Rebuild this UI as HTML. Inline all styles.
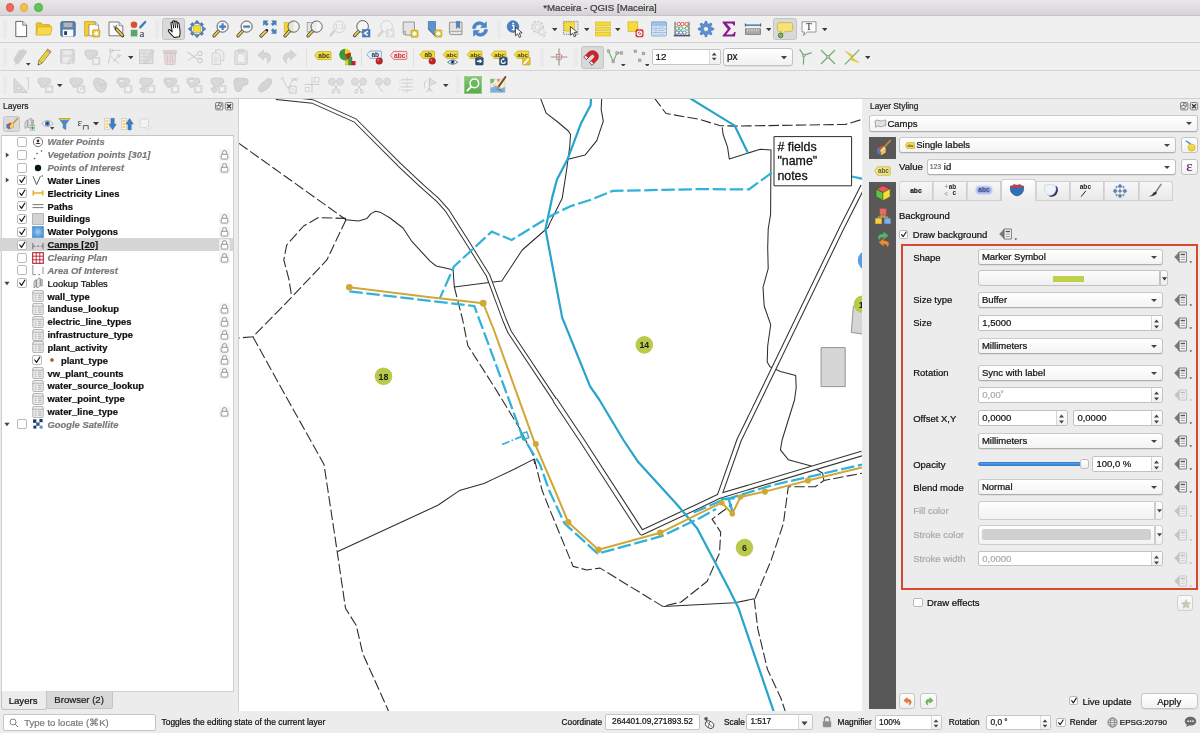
<!DOCTYPE html>
<html><head><meta charset="utf-8"><title>*Maceira - QGIS [Maceira]</title>
<style>
*{box-sizing:border-box;margin:0;padding:0}
html,body{width:1200px;height:733px;overflow:hidden}
body{position:relative;background:#ececec;font-family:"Liberation Sans",sans-serif;color:#1a1a1a;font-size:9.5px;-webkit-text-stroke:0.22px currentColor}
.abs{position:absolute}
#layers,#styling,#status,#titlebar,#toolbars,#map{will-change:transform}
#titlebar{left:0;top:0;width:1200px;height:15.6px;background:linear-gradient(#e9e7e9,#d6d4d6);border-bottom:0.6px solid #c6c4c6}
#titlebar .t{left:0;width:1200px;top:1px;text-align:center;font-size:9.7px;color:#3c3c3c;line-height:13px}
.tl{width:8.6px;height:8.6px;border-radius:50%;top:3.3px}
#toolbars{left:0;top:16px;width:1200px;height:83px;background:#f0f0f0}
.tbsep{left:0;width:1200px;height:1px;background:#d2d2d2}
#map{left:239px;top:99px;width:623px;height:612px;background:#fff;overflow:hidden}
.ic{position:absolute;width:20px;height:20px}
/*LAYERS*/
#layers{left:0;top:99px;width:238px;height:590px}
.row{position:absolute;left:2px;width:230px;height:13px;font-size:9.4px;font-weight:bold;line-height:13px;white-space:nowrap;color:#111}
.row.off{color:#7a7a7a;font-style:italic}
.row.grp{font-weight:normal}
.row .tx{position:absolute;left:45px;top:0}
.cb{position:absolute;width:10px;height:10px;border:1px solid #b9b9b9;border-radius:2px;background:#fff}
.cb svg{position:absolute;left:0;top:0;width:100%;height:100%}
/*STYLING*/
.combo{position:absolute;height:16px;border:1px solid #c2c2c2;border-top-color:#cacaca;border-bottom-color:#adadad;border-radius:3px;background:linear-gradient(#fff,#f3f3f3);font-size:9.6px;line-height:14px;padding-left:4px;white-space:nowrap;color:#111;box-shadow:0 0.5px 0.5px rgba(0,0,0,.12)}
.combo::after{content:"";position:absolute;right:5px;top:6px;border:3px solid transparent;border-top:3.5px solid #444;border-bottom:0}
.spin{position:absolute;height:16px;border:1px solid #c2c2c2;border-radius:2px;background:#fff;font-size:9.6px;line-height:14px;padding-left:3px;white-space:nowrap;color:#111}
.lbl{position:absolute;font-size:9.6px;line-height:12px;white-space:nowrap;color:#111}
.dis{color:#a9a9a9 !important}
</style></head>
<body>
<!--TITLEBAR-->
<div id="titlebar" class="abs">
 <div class="abs tl" style="left:5.7px;background:#ee6a5f;border:0.5px solid #de5a50"></div>
 <div class="abs tl" style="left:19.9px;background:#f5bf4f;border:0.5px solid #e0aa3a"></div>
 <div class="abs tl" style="left:34.2px;background:#61c554;border:0.5px solid #50b044"></div>
 <div class="abs t">*Maceira - QGIS [Maceira]</div>
</div>
<!--TOOLBARS-->
<div id="toolbars" class="abs">
 <div class="abs tbsep" style="top:26px"></div>
 <div class="abs tbsep" style="top:54.4px"></div>
<!--TB1-->
<div class="abs" style="left:2.5px;top:4.2px;width:4px;height:18px;background-image:radial-gradient(circle,#dadada 0.6px,transparent 0.8px);background-size:2px 2px;opacity:.55"></div>
<svg class="abs" style="left:10.7px;top:3.2px" width="20" height="20" viewBox="0 0 20 20"><path d="M4.8,2.4 H11.8 L15.6,6.2 V17.6 H4.8 Z" fill="#fff" stroke="#555" stroke-width="0.9" stroke-linejoin="round"/><path d="M11.8,2.4 V6.2 H15.6" fill="#eee" stroke="#555" stroke-width="0.8" stroke-linejoin="round"/></svg>
<svg class="abs" style="left:34.0px;top:3.2px" width="20" height="20" viewBox="0 0 20 20"><path d="M2.2,15.8 V4.8 Q2.2,3.8 3.2,3.8 H7 L8.6,5.6 H15.2 Q16.2,5.6 16.2,6.6 V8" fill="#e9c32f" stroke="#cfa51d" stroke-width="0.8"/><path d="M2.2,16 L3.6,8.6 Q3.8,7.8 4.8,7.8 H17.2 Q18.2,7.8 18,8.8 L16.6,15.2 Q16.4,16 15.4,16 Z" fill="#f9db4a" stroke="#d3a91f" stroke-width="0.8"/></svg>
<svg class="abs" style="left:57.8px;top:3.2px" width="20" height="20" viewBox="0 0 20 20"><rect x="2.8" y="2.6" width="14.4" height="14.8" rx="1.6" fill="#5584b4" stroke="#3f6c9c" stroke-width="0.9"/><rect x="5.4" y="3.6" width="9.2" height="4.6" fill="#b5b5b5" stroke="#8a8a8a" stroke-width="0.5"/><rect x="4.8" y="10.6" width="10.4" height="7" fill="#fdfdfd"/><rect x="6.2" y="12.2" width="2.8" height="3.8" fill="#1e3c66"/></svg>
<svg class="abs" style="left:81.6px;top:3.2px" width="20" height="20" viewBox="0 0 20 20"><path d="M7,3 H13.4 L16.6,6.2 V16.8 H7 Z" fill="#fff" stroke="#888" stroke-width="0.8"/><path d="M13.4,3 V6.2 H16.6" fill="none" stroke="#888" stroke-width="0.7"/><path d="M2.6,2.6 H12.6 V5.6 H6.4 V17 H2.6 Z" fill="#f2cf3c" stroke="#c9a21c" stroke-width="0.8"/><rect x="10.6" y="10.8" width="7.2" height="7.2" rx="0.8" fill="#e3c12c" stroke="#b49318" stroke-width="0.6"/><path d="M14.2,11.700000000000001 L14.2,17.1 M11.5,14.4 L16.900000000000002,14.4 M12.2,12.4 L16.2,16.4 M16.2,12.4 L12.2,16.4" stroke="#fff" stroke-width="0.95"/><circle cx="14.2" cy="14.4" r="1.3" fill="#fff"/></svg>
<svg class="abs" style="left:105.5px;top:3.2px" width="20" height="20" viewBox="0 0 20 20"><path d="M3,3 H13 L16.8,6.8 V16.8 H3 Z" fill="#fbfbfb" stroke="#6e6e6e" stroke-width="0.9" stroke-linejoin="round"/><path d="M13,3 V6.8 H16.8" fill="#e8e8e8" stroke="#6e6e6e" stroke-width="0.7"/><path d="M7.4,7 L10,9.8 M10.8,6.2 L8.4,9.6" stroke="#8a8a8a" stroke-width="1.3"/><path d="M10.4,10 L16.6,16.6" stroke="#3a3a3a" stroke-width="3.4" stroke-linecap="round"/><path d="M10.8,10.4 L16.3,16.3" stroke="#e9c23a" stroke-width="2" stroke-linecap="round"/></svg>
<svg class="abs" style="left:128.4px;top:3.2px" width="20" height="20" viewBox="0 0 20 20"><circle cx="6" cy="5.8" r="3.3" fill="#d9512c"/><path d="M12.2,8.4 L17.2,3" stroke="#3b7cc0" stroke-width="2.3" stroke-linecap="round"/><rect x="2.8" y="10.8" width="6.6" height="6.6" fill="#5aa56c"/><text x="11.4" y="17.6" font-family="Liberation Serif" font-size="11" fill="#333" style="-webkit-text-stroke:0">a</text></svg>
<div class="abs" style="left:155.4px;top:4.2px;width:4px;height:18px;background-image:radial-gradient(circle,#dadada 0.6px,transparent 0.8px);background-size:2px 2px;opacity:.55"></div>
<div class="abs" style="left:162.2px;top:2.4px;width:22.8px;height:22.0px;background:#d9d9d9;border:1px solid #c4c4c4;border-radius:2.5px"></div>
<svg class="abs" style="left:163.6px;top:3.2px" width="20" height="20" viewBox="0 0 20 20"><path d="M7.4,18.6 C5.4,15.6 3.4,13.4 2.6,11.6 C2.1,10.3 3.7,9.6 4.6,10.8 L6.2,12.8 V4.4 C6.2,2.9 8.2,2.9 8.2,4.4 V9 V3 C8.2,1.5 10.2,1.5 10.2,3 V9 V3.8 C10.2,2.4 12.2,2.4 12.2,3.8 V9.4 V5.6 C12.2,4.3 14.1,4.3 14.1,5.7 V12.8 C14.1,15.4 13.4,17 12.8,18.6 Z" fill="#fff" stroke="#111" stroke-width="1" stroke-linejoin="round" transform="rotate(-8 10 10) translate(1.6 -0.2)"/></svg>
<svg class="abs" style="left:187.2px;top:3.2px" width="20" height="20" viewBox="0 0 20 20"><g fill="#4a7fc0" stroke="#2f5f9a" stroke-width="0.5"><path d="M10,1.2 L12.8,4.6 H7.2 Z"/><path d="M10,18.8 L12.8,15.4 H7.2 Z"/><path d="M1.2,10 L4.6,7.2 V12.8 Z"/><path d="M18.8,10 L15.4,7.2 V12.8 Z"/><path d="M5.4,3.4 L7.4,5.4 L5.4,7.4 L3.4,5.4 Z"/><path d="M14.6,3.4 L16.6,5.4 L14.6,7.4 L12.6,5.4 Z"/><path d="M5.4,12.6 L7.4,14.6 L5.4,16.6 L3.4,14.6 Z"/><path d="M14.6,12.6 L16.6,14.6 L14.6,16.6 L12.6,14.6 Z"/></g><rect x="6.4" y="6.4" width="7.2" height="7.2" fill="#f4dc3a" stroke="#c9ab1d" stroke-width="0.6"/></svg>
<svg class="abs" style="left:211.4px;top:3.2px" width="20" height="20" viewBox="0 0 20 20"><path d="M7.6,11.9 L3,16.9" stroke="#3a3a3a" stroke-width="3.2" stroke-linecap="round"/><path d="M7.2,12.3 L3.2,16.7" stroke="#eccb45" stroke-width="1.9" stroke-linecap="round"/><circle cx="11.6" cy="7.6" r="5.6" fill="#f4f4f4" stroke="#4a4a4a" stroke-width="0.9"/><path d="M11.6,4.2 V11 M8.2,7.6 H15" stroke="#3f7bc0" stroke-width="2.1"/></svg>
<svg class="abs" style="left:234.8px;top:3.2px" width="20" height="20" viewBox="0 0 20 20"><path d="M7.6,11.9 L3,16.9" stroke="#3a3a3a" stroke-width="3.2" stroke-linecap="round"/><path d="M7.2,12.3 L3.2,16.7" stroke="#eccb45" stroke-width="1.9" stroke-linecap="round"/><circle cx="11.6" cy="7.6" r="5.6" fill="#f4f4f4" stroke="#4a4a4a" stroke-width="0.9"/><path d="M8.2,7.6 H15" stroke="#3f7bc0" stroke-width="2.1"/></svg>
<svg class="abs" style="left:258.2px;top:3.2px" width="20" height="20" viewBox="0 0 20 20"><path d="M8.6,11.6 L3,17" stroke="#3a3a3a" stroke-width="3.2" stroke-linecap="round"/><path d="M8.2,12 L3.2,16.8" stroke="#eccb45" stroke-width="1.9" stroke-linecap="round"/><g fill="#4a80c2" stroke="#2f5f9a" stroke-width="0.4"><path d="M5.4,1.8 H10 L8.6,3.2 L10.4,5 L8.6,6.8 L6.8,5 L5.4,6.4 Z"/><path d="M18.2,1.8 V6.4 L16.8,5 L15,6.8 L13.2,5 L15,3.2 L13.6,1.8 Z"/><path d="M18.2,14.6 H13.6 L15,13.2 L13.2,11.4 L15,9.6 L16.8,11.4 L18.2,10 Z"/></g><circle cx="8.8" cy="11.2" r="1.1" fill="#222"/></svg>
<svg class="abs" style="left:281.6px;top:3.2px" width="20" height="20" viewBox="0 0 20 20"><rect x="2.2" y="3.6" width="8.4" height="9.4" fill="#f2d632" stroke="#c9ab1d" stroke-width="0.6"/><path d="M7.6,11.9 L3,16.9" stroke="#3a3a3a" stroke-width="3.2" stroke-linecap="round"/><path d="M7.2,12.3 L3.2,16.7" stroke="#eccb45" stroke-width="1.9" stroke-linecap="round"/><circle cx="11.6" cy="7.6" r="5.6" fill="#e4e4d4" stroke="#4a4a4a" stroke-width="0.9"/><path d="M11.6,2.6 a5,5 0 0 1 0,10 Z" fill="#fff" opacity="0.6"/></svg>
<svg class="abs" style="left:305.0px;top:3.2px" width="20" height="20" viewBox="0 0 20 20"><rect x="2.2" y="3.6" width="8.4" height="9.4" fill="#e6e6e6" stroke="#8a8a8a" stroke-width="0.7"/><path d="M7.6,11.9 L3,16.9" stroke="#3a3a3a" stroke-width="3.2" stroke-linecap="round"/><path d="M7.2,12.3 L3.2,16.7" stroke="#eccb45" stroke-width="1.9" stroke-linecap="round"/><circle cx="11.6" cy="7.6" r="5.6" fill="#ebebeb" stroke="#4a4a4a" stroke-width="0.9"/><path d="M11.6,2.6 a5,5 0 0 1 0,10 Z" fill="#fff" opacity="0.6"/></svg>
<svg class="abs" style="left:328.4px;top:3.2px" width="20" height="20" viewBox="0 0 20 20"><g opacity="0.55"><path d="M6.6,11.6 L2.6,16.4" stroke="#bdbdbd" stroke-width="2.6" stroke-linecap="round"/><circle cx="11.4" cy="7.8" r="5.8" fill="#f0f0f0" stroke="#b4b4b4" stroke-width="0.9"/><text x="11.4" y="10.4" font-family="Liberation Sans" font-size="7" text-anchor="middle" fill="#aaa">1:1</text></g></svg>
<svg class="abs" style="left:352.2px;top:3.2px" width="20" height="20" viewBox="0 0 20 20"><path d="M7,11.8 L2.6,16.6" stroke="#3a3a3a" stroke-width="3.2" stroke-linecap="round"/><path d="M6.6,12.2 L2.8,16.4" stroke="#eccb45" stroke-width="1.9" stroke-linecap="round"/><circle cx="10.6" cy="7.4" r="5.8" fill="#f6f6f6" stroke="#4a4a4a" stroke-width="0.9"/><rect x="10.6" y="10.6" width="7.4" height="7.4" fill="#4a80bf" stroke="#2f5f9a" stroke-width="0.5"/><path d="M15.8,12.2 L12.6,14.3 L15.8,16.4" fill="none" stroke="#fff" stroke-width="1.4"/></svg>
<svg class="abs" style="left:375.8px;top:3.2px" width="20" height="20" viewBox="0 0 20 20"><g opacity="0.5"><path d="M7,11.8 L2.6,16.6" stroke="#bbb" stroke-width="2.8" stroke-linecap="round"/><circle cx="10.6" cy="7.4" r="5.8" fill="#f3f3f3" stroke="#b0b0b0" stroke-width="0.9"/><rect x="10.6" y="10.6" width="7.4" height="7.4" fill="#d0d0d0" stroke="#b4b4b4" stroke-width="0.5"/><path d="M12.8,12.2 L16,14.3 L12.8,16.4" fill="none" stroke="#fff" stroke-width="1.4"/></g></svg>
<svg class="abs" style="left:399.6px;top:3.2px" width="20" height="20" viewBox="0 0 20 20"><path d="M3.2,3 H14.4 V14.6 Q14.4,16 13,16 H5.4 Q3.2,16 3.2,13.8 Z" fill="#e4e4e4" stroke="#8e8e8e" stroke-width="0.9"/><path d="M3.2,13.8 Q3.4,12 5.4,12.4 V16" fill="#cfcfcf" stroke="#8e8e8e" stroke-width="0.7"/><rect x="11" y="11.2" width="7" height="7" rx="0.8" fill="#e3c12c" stroke="#b49318" stroke-width="0.6"/><path d="M14.5,12.1 L14.5,17.3 M11.9,14.7 L17.1,14.7 M12.6,12.799999999999999 L16.4,16.599999999999998 M16.4,12.799999999999999 L12.6,16.599999999999998" stroke="#fff" stroke-width="0.95"/><circle cx="14.5" cy="14.7" r="1.3" fill="#fff"/></svg>
<svg class="abs" style="left:423.6px;top:3.2px" width="20" height="20" viewBox="0 0 20 20"><path d="M4.4,2.6 H11.4 V17.4 L7.9,14 L4.4,10.4 Z" fill="#4f84bf" stroke="#2f5f9a" stroke-width="0.7"/><path d="M4.4,2.6 H11.4 V14 H9 L4.4,9 Z" fill="#5f93cd"/><rect x="10.8" y="11" width="7" height="7" rx="0.8" fill="#e3c12c" stroke="#b49318" stroke-width="0.6"/><path d="M14.3,11.9 L14.3,17.1 M11.700000000000001,14.5 L16.900000000000002,14.5 M12.4,12.6 L16.2,16.4 M16.2,12.6 L12.4,16.4" stroke="#fff" stroke-width="0.95"/><circle cx="14.3" cy="14.5" r="1.3" fill="#fff"/></svg>
<svg class="abs" style="left:446.4px;top:3.2px" width="20" height="20" viewBox="0 0 20 20"><path d="M3.4,3.2 H16 V15.6 H5.4 Q3.4,15.6 3.4,13.8 Z" fill="#e2e2e2" stroke="#8e8e8e" stroke-width="0.9"/><path d="M3.4,13.8 Q3.6,12.2 5.6,12.4 H16" fill="none" stroke="#8e8e8e" stroke-width="0.7"/><path d="M10.4,2.4 H13.6 V9.4 L12,7.8 L10.4,9.4 Z" fill="#4f84bf" stroke="#2f5f9a" stroke-width="0.5"/></svg>
<svg class="abs" style="left:470.2px;top:3.2px" width="20" height="20" viewBox="0 0 20 20"><g fill="#4a88cc" stroke="#2f66a8" stroke-width="0.5" stroke-linejoin="round"><path d="M2.6,9.4 C2.6,5.4 5.8,2.8 9.6,2.8 C11.6,2.8 13.2,3.6 14.4,4.8 L16.4,2.8 V8.6 H10.6 L12.4,6.8 C11.6,6 10.8,5.6 9.6,5.6 C7.4,5.6 5.6,7.2 5.4,9.4 Z"/><path d="M17.4,10.6 C17.4,14.6 14.2,17.2 10.4,17.2 C8.4,17.2 6.8,16.4 5.6,15.2 L3.6,17.2 V11.4 H9.4 L7.6,13.2 C8.4,14 9.2,14.4 10.4,14.4 C12.6,14.4 14.4,12.8 14.6,10.6 Z"/></g></svg>
<div class="abs" style="left:497.0px;top:4.2px;width:4px;height:18px;background-image:radial-gradient(circle,#dadada 0.6px,transparent 0.8px);background-size:2px 2px;opacity:.55"></div>
<svg class="abs" style="left:505.4px;top:3.2px" width="20" height="20" viewBox="0 0 20 20"><circle cx="8" cy="7.6" r="5.8" fill="#4a7fc0" stroke="#2f5f9a" stroke-width="0.6"/><path d="M7,6.6 H8.8 V10.6 H9.8 M6.8,10.6 H9.8" stroke="#fff" stroke-width="1.4" fill="none"/><circle cx="8.2" cy="4.4" r="1" fill="#fff"/><path d="M10.4,8.2 l0,8.6 l2.2,-2 l1.7,3.6 l1.6,-0.8 l-1.7,-3.5 l3,-0.2 Z" fill="#fff" stroke="#222" stroke-width="0.8" stroke-linejoin="round"/></svg>
<svg class="abs" style="left:528.6px;top:3.2px" width="20" height="20" viewBox="0 0 20 20"><g opacity="0.5"><circle cx="8.6" cy="8" r="5.4" fill="#e6e6e6" stroke="#b0b0b0" stroke-width="2" stroke-dasharray="2.2 1.3"/><circle cx="8.6" cy="8" r="2.6" fill="#f3f3f3" stroke="#b0b0b0" stroke-width="0.8"/><path d="M11,9 l0,7.6 l2,-1.8 l1.5,3.2 l1.4,-0.7 l-1.5,-3.1 l2.6,-0.2 Z" fill="#f4f4f4" stroke="#aaa" stroke-width="0.8"/></g></svg>
<svg class="abs" style="left:551.6px;top:12.0px" width="5.6" height="3.2" viewBox="0 0 5.6 3.2"><path d="M0,0 H5.6 L2.8,3.2 Z" fill="#3c3c3c"/></svg>
<svg class="abs" style="left:561.2px;top:3.2px" width="20" height="20" viewBox="0 0 20 20"><rect x="2.4" y="2.4" width="14.6" height="13" fill="#e6e6e6" stroke="#666" stroke-width="0.7" stroke-dasharray="1.4 1"/><rect x="3" y="3" width="10.2" height="9" fill="#f4dc3a" stroke="#c9ab1d" stroke-width="0.5"/><path d="M9.4,7.6 l0,8.6 l2.2,-2 l1.7,3.6 l1.6,-0.8 l-1.7,-3.5 l3,-0.2 Z" fill="#fff" stroke="#222" stroke-width="0.8" stroke-linejoin="round"/></svg>
<svg class="abs" style="left:583.6px;top:12.0px" width="5.6" height="3.2" viewBox="0 0 5.6 3.2"><path d="M0,0 H5.6 L2.8,3.2 Z" fill="#3c3c3c"/></svg>
<svg class="abs" style="left:592.8px;top:3.2px" width="20" height="20" viewBox="0 0 20 20"><g fill="#f4dc3a" stroke="#d4b422" stroke-width="0.6"><rect x="2.6" y="3" width="14.8" height="3.8"/><rect x="2.6" y="8.1" width="14.8" height="3.8"/><rect x="2.6" y="13.2" width="14.8" height="3.8"/></g></svg>
<svg class="abs" style="left:615.4px;top:12.0px" width="5.6" height="3.2" viewBox="0 0 5.6 3.2"><path d="M0,0 H5.6 L2.8,3.2 Z" fill="#3c3c3c"/></svg>
<svg class="abs" style="left:625.4px;top:3.2px" width="20" height="20" viewBox="0 0 20 20"><rect x="3" y="2.8" width="9.8" height="9.6" fill="#f4dc3a" stroke="#c9ab1d" stroke-width="0.6"/><rect x="10.8" y="10.6" width="7.4" height="7.4" rx="1.4" fill="#e03a3a" stroke="#b82222" stroke-width="0.5"/><circle cx="14.5" cy="14.3" r="2.3" fill="none" stroke="#fff" stroke-width="1.1"/><path d="M12.9,15.9 L16.1,12.7" stroke="#fff" stroke-width="1.1"/></svg>
<svg class="abs" style="left:648.6px;top:3.2px" width="20" height="20" viewBox="0 0 20 20"><rect x="2.6" y="3" width="14.8" height="14" rx="0.8" fill="#eaf1fa" stroke="#7aa4d4" stroke-width="0.9"/><rect x="2.6" y="3" width="14.8" height="3.2" fill="#a4c3e6" stroke="#7aa4d4" stroke-width="0.6"/><path d="M7,6.2 V17 M2.4,9.8 H17.6 M2.4,13.4 H17.6" stroke="#7ea8d6" stroke-width="0.7"/><path d="M8.6,8 H15.6 M8.6,11.6 H15.6 M8.6,15.2 H15.6 M3.8,8 H5.6 M3.8,11.6 H5.6 M3.8,15.2 H5.6" stroke="#9dbde0" stroke-width="1"/></svg>
<svg class="abs" style="left:672.0px;top:3.2px" width="20" height="20" viewBox="0 0 20 20"><path d="M3,2.8 V16.2 M17,2.8 V16.2" stroke="#777" stroke-width="1.2"/><path d="M1.8,16.6 H18.2" stroke="#555" stroke-width="1.6"/><path d="M3,5 H17 M3,9.4 H17 M3,13.6 H17" stroke="#999" stroke-width="0.6"/><g stroke-width="0.8" fill="#fff"><circle cx="6.8" cy="5" r="1.7" stroke="#d43a3a"/><circle cx="10.4" cy="5" r="1.7" stroke="#d43a3a"/><circle cx="14.6" cy="5" r="1.7" stroke="#d43a3a"/><circle cx="5.2" cy="9.4" r="1.7" stroke="#3a9a4a"/><circle cx="8.8" cy="9.4" r="1.7" stroke="#3a9a4a"/><circle cx="14.8" cy="9.4" r="1.7" stroke="#3a9a4a"/><circle cx="5.2" cy="13.6" r="1.7" stroke="#3a6ab8"/><circle cx="8.8" cy="13.6" r="1.7" stroke="#3a6ab8"/><circle cx="12.4" cy="13.6" r="1.7" stroke="#3a6ab8"/></g></svg>
<svg class="abs" style="left:695.8px;top:3.2px" width="20" height="20" viewBox="0 0 20 20"><path d="M9.24,2.24 L10.76,2.24 L11.57,4.83 L12.55,5.24 L14.95,3.97 L16.03,5.05 L14.76,7.45 L15.17,8.43 L17.76,9.24 L17.76,10.76 L15.17,11.57 L14.76,12.55 L16.03,14.95 L14.95,16.03 L12.55,14.76 L11.57,15.17 L10.76,17.76 L9.24,17.76 L8.43,15.17 L7.45,14.76 L5.05,16.03 L3.97,14.95 L5.24,12.55 L4.83,11.57 L2.24,10.76 L2.24,9.24 L4.83,8.43 L5.24,7.45 L3.97,5.05 L5.05,3.97 L7.45,5.24 L8.43,4.83 Z" fill="#5a8fd2" stroke="#3a6fb4" stroke-width="0.6" stroke-linejoin="round"/><circle cx="10" cy="10" r="2.6" fill="#f0f0f0" stroke="#3a6fb4" stroke-width="0.6"/></svg>
<svg class="abs" style="left:719.2px;top:3.2px" width="20" height="20" viewBox="0 0 20 20"><path d="M3.6,2.6 H16 V6.4 H14.6 Q14.4,4.4 12.4,4.4 H7.6 L12,9.6 L7.2,15.4 H12.8 Q14.8,15.4 15.2,13 H16.6 L16,17.6 H3.6 V16.4 L8.8,10.2 L3.6,3.8 Z" fill="#8a1a8e"/></svg>
<svg class="abs" style="left:742.6px;top:3.2px" width="20" height="20" viewBox="0 0 20 20"><path d="M2.4,4.6 V7.6 M17.6,4.6 V7.6 M2.4,6.1 H17.6" stroke="#2f5fa0" stroke-width="1.1"/><rect x="2.4" y="9.8" width="15.2" height="5.6" fill="#a8a8a8" stroke="#6e6e6e" stroke-width="0.7"/><path d="M4.6,9.8 V12.4 M6.8,9.8 V11.6 M9,9.8 V12.4 M11.2,9.8 V11.6 M13.4,9.8 V12.4 M15.6,9.8 V11.6" stroke="#f0f0f0" stroke-width="0.7"/></svg>
<svg class="abs" style="left:765.8px;top:12.0px" width="5.6" height="3.2" viewBox="0 0 5.6 3.2"><path d="M0,0 H5.6 L2.8,3.2 Z" fill="#3c3c3c"/></svg>
<div class="abs" style="left:773.4px;top:2.4px;width:23.2px;height:22.0px;background:#d9d9d9;border:1px solid #c4c4c4;border-radius:2.5px"></div>
<svg class="abs" style="left:775.2px;top:3.8px" width="20" height="20" viewBox="0 0 20 20"><path d="M4.6,2.6 H15.4 Q17.6,2.6 17.6,4.8 V9.4 Q17.6,11.6 15.4,11.6 H10 L6.4,15 V11.6 H4.6 Q2.4,11.6 2.4,9.4 V4.8 Q2.4,2.6 4.6,2.6 Z" fill="#f6e27c" stroke="#c9b23a" stroke-width="0.8"/><circle cx="5.6" cy="15.4" r="2.3" fill="#7ab86a" stroke="#3a7a32" stroke-width="0.9"/></svg>
<svg class="abs" style="left:798.6px;top:3.2px" width="20" height="20" viewBox="0 0 20 20"><path d="M3,2.8 H17 V13 H8.4 L4.4,16.6 L5.6,13 H3 Z" fill="#fdfdfd" stroke="#8a8a8a" stroke-width="0.9" stroke-linejoin="round"/><text x="10" y="11.4" font-family="Liberation Serif" font-size="9.6" text-anchor="middle" fill="#222">T</text></svg>
<svg class="abs" style="left:821.6px;top:12.0px" width="5.6" height="3.2" viewBox="0 0 5.6 3.2"><path d="M0,0 H5.6 L2.8,3.2 Z" fill="#3c3c3c"/></svg>
<div class="abs" style="left:2.5px;top:32.2px;width:4px;height:18px;background-image:radial-gradient(circle,#dadada 0.6px,transparent 0.8px);background-size:2px 2px;opacity:.55"></div>
<svg class="abs" style="left:10.5px;top:31.2px" width="20" height="20" viewBox="0 0 20 20"><g fill="#d2d2d2" stroke="#c6c6c6" stroke-width="0.7"><path d="M11.4,2.4 L15.8,4.4 L8.4,15.6 L4.6,17.4 L5,13.4 Z"/><path d="M8.4,3.4 L11,4.6 L5.6,13 L3.2,14.4 L3.4,11.6 Z"/></g></svg>
<svg class="abs" style="left:26.3px;top:47.2px" width="4.6" height="2.8" viewBox="0 0 4.6 2.8"><path d="M0,0 H4.6 L2.3,2.8 Z" fill="#3c3c3c"/></svg>
<svg class="abs" style="left:33.6px;top:31.2px" width="20" height="20" viewBox="0 0 20 20"><path d="M13.6,2.2 L17,4.6 L8.2,16 L4.2,18 L4.8,13.6 Z" fill="#f1dc52" stroke="#8a7a1a" stroke-width="0.8" stroke-linejoin="round"/><path d="M15.3,3.4 L6.5,14.8" stroke="#c9b02a" stroke-width="0.8"/><path d="M4.8,13.6 L8.2,16 L4.2,18 Z" fill="#e8d9b0" stroke="#8a7a1a" stroke-width="0.6"/><path d="M4.2,18 L4.5,16.4 L5.6,17.3 Z" fill="#333"/><path d="M13.6,2.2 L17,4.6 L16,5.9 L12.6,3.5 Z" fill="#d8b6b0" stroke="#8a7a1a" stroke-width="0.5"/></svg>
<svg class="abs" style="left:57.6px;top:31.2px" width="20" height="20" viewBox="0 0 20 20"><rect x="2.6" y="2.6" width="13.6" height="13.6" rx="1.2" fill="#d9d9d9" stroke="#c6c6c6" stroke-width="0.8"/><rect x="5" y="3.6" width="8.6" height="4.2" fill="#e9e9e9"/><rect x="4.6" y="10" width="9.6" height="6.2" fill="#ececec"/><path d="M16.8,9.4 L11.4,16.6 L9.6,17.4 L9.8,15.4 L15.2,8.4 Z" fill="#dedede" stroke="#c6c6c6" stroke-width="0.6"/></svg>
<svg class="abs" style="left:81.6px;top:31.2px" width="20" height="20" viewBox="0 0 20 20"><path d="M3,6.4 Q2.4,2.8 6.6,3 Q9.4,3.2 11.4,3.4 Q15.4,2.6 15.8,6 Q16,8.6 13.4,9 Q11,9 10.4,10.6 Q9.4,13 6.6,12.2 Q5.2,11.6 5.4,9.8 Q3.2,9.2 3,6.4 Z" fill="#d9d9d9" stroke="#c6c6c6" stroke-width="0.8"/><rect x="10.4" y="10.4" width="7.4" height="7.4" rx="0.8" fill="#dedede" stroke="#c4c4c4" stroke-width="0.6"/><path d="M14.100000000000001,11.4 L14.100000000000001,16.8 M11.4,14.100000000000001 L16.8,14.100000000000001 M12.1,12.1 L16.1,16.1 M16.1,12.1 L12.1,16.1" stroke="#f6f6f6" stroke-width="0.95"/><circle cx="14.100000000000001" cy="14.100000000000001" r="1.3" fill="#f6f6f6"/></svg>
<svg class="abs" style="left:105.2px;top:31.2px" width="20" height="20" viewBox="0 0 20 20"><g stroke="#c8c8c8" fill="none" stroke-width="0.9"><path d="M3.4,16.4 L6.2,3.6 L15.4,3.2"/><path d="M6,9.4 L14.4,17 M8.4,14.8 L13.6,8.6"/></g><g fill="#e2e2e2" stroke="#c0c0c0" stroke-width="0.6"><rect x="4.8" y="2.2" width="2.6" height="2.6"/><path d="M12.6,7.4 L15.6,8.2 L14.4,10.6 Z"/></g></svg>
<svg class="abs" style="left:127.8px;top:40.0px" width="5.6" height="3.2" viewBox="0 0 5.6 3.2"><path d="M0,0 H5.6 L2.8,3.2 Z" fill="#3c3c3c"/></svg>
<svg class="abs" style="left:137.2px;top:31.2px" width="20" height="20" viewBox="0 0 20 20"><rect x="2.4" y="3" width="13.6" height="13.4" fill="#e3e3e3" stroke="#c6c6c6" stroke-width="0.8"/><path d="M2.4,6.4 H16 M2.4,9.8 H16 M2.4,13.2 H16 M7,3 V16.4" stroke="#cfcfcf" stroke-width="0.7"/><path d="M17.2,4.6 L10.2,15.8 L8,17 L8.2,14.6 L15.2,3.4 Z" fill="#dcdcdc" stroke="#c6c6c6" stroke-width="0.7"/></svg>
<svg class="abs" style="left:160.2px;top:31.2px" width="20" height="20" viewBox="0 0 20 20"><path d="M4.4,6.6 H15.6 L14.8,17.4 H5.2 Z" fill="#e9dede" stroke="#d0bcbc" stroke-width="0.8"/><path d="M7.4,8.2 V16 M10,8.2 V16 M12.6,8.2 V16" stroke="#d2bebe" stroke-width="1"/><rect x="3.4" y="3.4" width="13.2" height="2.8" rx="0.6" fill="#dcd2d2" stroke="#cdbcbc" stroke-width="0.6"/></svg>
<svg class="abs" style="left:184.6px;top:31.2px" width="20" height="20" viewBox="0 0 20 20"><g stroke="#cdcdcd" fill="none" stroke-width="1.1"><path d="M2.4,5 L13,12.4 M2.8,13.4 L12.6,7.4"/><circle cx="14.8" cy="6.4" r="2.2"/><circle cx="15" cy="13.6" r="2.2"/></g></svg>
<svg class="abs" style="left:207.8px;top:31.2px" width="20" height="20" viewBox="0 0 20 20"><g fill="#ededed" stroke="#cacaca" stroke-width="0.8"><path d="M7.6,2.6 H12.6 L15.8,5.8 V13.6 H7.6 Z"/><path d="M4.2,6 H9.4 L12.6,9.2 V17.4 H4.2 Z"/></g><path d="M6,11 H10.6 M6,13.2 H10.6 M6,15.2 H9" stroke="#d6d6d6" stroke-width="0.8"/></svg>
<svg class="abs" style="left:231.2px;top:31.2px" width="20" height="20" viewBox="0 0 20 20"><rect x="3.8" y="3.6" width="12.4" height="13.8" rx="1" fill="#e4e4e4" stroke="#c8c8c8" stroke-width="0.8"/><rect x="7" y="2.4" width="6" height="2.6" rx="0.6" fill="#d6d6d6" stroke="#c4c4c4" stroke-width="0.6"/><rect x="6.4" y="7" width="7.6" height="8.6" fill="#f1f1f1" stroke="#cfcfcf" stroke-width="0.6"/></svg>
<svg class="abs" style="left:255.2px;top:31.2px" width="20" height="20" viewBox="0 0 20 20"><path d="M8.6,3 L2.6,8 L8.6,13 V10 Q13.6,9.6 12.4,16.4 Q17.6,12 14.6,7.6 Q12.6,5.4 8.6,5.8 Z" fill="#d6d6d6" stroke="#c6c6c6" stroke-width="0.6"/></svg>
<svg class="abs" style="left:278.6px;top:31.2px" width="20" height="20" viewBox="0 0 20 20"><path d="M11.4,3 L17.4,8 L11.4,13 V10 Q6.4,9.6 7.6,16.4 Q2.4,12 5.4,7.6 Q7.4,5.4 11.4,5.8 Z" fill="#d6d6d6" stroke="#c6c6c6" stroke-width="0.6"/></svg>
<div class="abs" style="left:306.1px;top:32.2px;width:1px;height:18px;background:#dfdfdf"></div>
<svg class="abs" style="left:313.0px;top:29.6px" width="20" height="20" viewBox="0 0 20 20"><path d="M4.800000000000001,5.6 H17.2 a0.8,0.8 0 0 1 0.8,0.8 V12.799999999999999 a0.8,0.8 0 0 1 -0.8,0.8 H4.800000000000001 L1.6,9.6 Z" fill="#f3dc3c" stroke="#c2a41a" stroke-width="0.7" stroke-linejoin="round"/><text x="10.999999999999998" y="11.8" font-family="Liberation Sans" font-weight="bold" font-size="6.6" text-anchor="middle" fill="#3a3a2a">abc</text></svg>
<svg class="abs" style="left:337.2px;top:31.2px" width="20" height="20" viewBox="0 0 20 20"><circle cx="8" cy="7.6" r="5.8" fill="#3f9a3f"/><path d="M8,7.6 L8,1.8 A5.8,5.8 0 0 1 13.4,5.6 Z" fill="#f2d21f"/><path d="M8,7.6 L13.4,5.6 A5.8,5.8 0 0 1 11,12.6 Z" fill="#c8281e"/><path d="M8,7.6 L3,4.6" stroke="#2a6a2a" stroke-width="0.5"/><rect x="8.6" y="13.4" width="3.2" height="4.6" fill="#f2d21f" stroke="#b89a14" stroke-width="0.4"/><rect x="11.8" y="10" width="3.2" height="8" fill="#3f9a3f" stroke="#2a6a2a" stroke-width="0.4"/><rect x="15" y="14.2" width="3.2" height="3.8" fill="#c8281e" stroke="#8a1a14" stroke-width="0.4"/></svg>
<div class="abs" style="left:361.1px;top:32.2px;width:1px;height:18px;background:#dfdfdf"></div>
<svg class="abs" style="left:365.4px;top:31.2px" width="20" height="20" viewBox="0 0 20 20"><path d="M5.0,4 H15.599999999999998 a0.8,0.8 0 0 1 0.8,0.8 V10.6 a0.8,0.8 0 0 1 -0.8,0.8 H5.0 L1.8,7.7 Z" fill="#e8f0fa" stroke="#5a8fd0" stroke-width="0.7" stroke-linejoin="round"/><text x="10.299999999999999" y="9.9" font-family="Liberation Sans" font-weight="bold" font-size="6.6" text-anchor="middle" fill="#333">ab</text><circle cx="14.2" cy="14" r="3.3" fill="#c4242a" stroke="#8a1418" stroke-width="0.5"/><circle cx="13.2" cy="13" r="1" fill="#e87a7e"/></svg>
<svg class="abs" style="left:388.6px;top:29.8px" width="20" height="20" viewBox="0 0 20 20"><path d="M4.6,5.4 H16.999999999999996 a0.8,0.8 0 0 1 0.8,0.8 V12.6 a0.8,0.8 0 0 1 -0.8,0.8 H4.6 L1.4,9.4 Z" fill="#fbe6e6" stroke="#d83a3a" stroke-width="0.7" stroke-linejoin="round"/><text x="10.799999999999999" y="11.600000000000001" font-family="Liberation Sans" font-weight="bold" font-size="6.6" text-anchor="middle" fill="#c82a2a">abc</text></svg>
<div class="abs" style="left:413.1px;top:32.2px;width:1px;height:18px;background:#dfdfdf"></div>
<svg class="abs" style="left:417.8px;top:31.2px" width="20" height="20" viewBox="0 0 20 20"><path d="M5.0,4 H15.599999999999998 a0.8,0.8 0 0 1 0.8,0.8 V10.6 a0.8,0.8 0 0 1 -0.8,0.8 H5.0 L1.8,7.7 Z" fill="#f3dc3c" stroke="#c2a41a" stroke-width="0.7" stroke-linejoin="round"/><text x="10.299999999999999" y="9.9" font-family="Liberation Sans" font-weight="bold" font-size="6.6" text-anchor="middle" fill="#3a3a2a">ab</text><circle cx="14.2" cy="14" r="3.3" fill="#c4242a" stroke="#8a1418" stroke-width="0.5"/><circle cx="13.2" cy="13" r="1" fill="#e87a7e"/></svg>
<svg class="abs" style="left:441.2px;top:31.2px" width="20" height="20" viewBox="0 0 20 20"><path d="M5.4,4 H16.0 a0.8,0.8 0 0 1 0.8,0.8 V10.6 a0.8,0.8 0 0 1 -0.8,0.8 H5.4 L2.2,7.7 Z" fill="#f3dc3c" stroke="#c2a41a" stroke-width="0.7" stroke-linejoin="round"/><text x="10.7" y="9.9" font-family="Liberation Sans" font-weight="bold" font-size="6.2" text-anchor="middle" fill="#3a3a2a">abc</text><path d="M6.6,15.2 Q11.4,10.4 16.8,15.2 Q11.4,19.4 6.6,15.2 Z" fill="#fff" stroke="#444" stroke-width="0.7"/><circle cx="11.6" cy="15" r="2.1" fill="#3a78b8"/><circle cx="11.6" cy="15" r="0.9" fill="#112"/></svg>
<svg class="abs" style="left:465.0px;top:31.2px" width="20" height="20" viewBox="0 0 20 20"><path d="M5.4,4 H16.0 a0.8,0.8 0 0 1 0.8,0.8 V10.6 a0.8,0.8 0 0 1 -0.8,0.8 H5.4 L2.2,7.7 Z" fill="#f3dc3c" stroke="#c2a41a" stroke-width="0.7" stroke-linejoin="round"/><text x="10.7" y="9.9" font-family="Liberation Sans" font-weight="bold" font-size="6.2" text-anchor="middle" fill="#3a3a2a">abc</text><rect x="10.6" y="10.4" width="7.6" height="7.6" rx="0.8" fill="#2f4f78" stroke="#1c3454" stroke-width="0.5"/><path d="M12,13.4 H14.6 V11.8 L17.2,14.2 L14.6,16.6 V15 H12 Z" fill="#fff"/></svg>
<svg class="abs" style="left:488.6px;top:31.2px" width="20" height="20" viewBox="0 0 20 20"><path d="M5.4,4 H16.0 a0.8,0.8 0 0 1 0.8,0.8 V10.6 a0.8,0.8 0 0 1 -0.8,0.8 H5.4 L2.2,7.7 Z" fill="#f3dc3c" stroke="#c2a41a" stroke-width="0.7" stroke-linejoin="round"/><text x="10.7" y="9.9" font-family="Liberation Sans" font-weight="bold" font-size="6.2" text-anchor="middle" fill="#3a3a2a">abc</text><rect x="10.6" y="10.4" width="7.6" height="7.6" rx="0.8" fill="#2f4f78" stroke="#1c3454" stroke-width="0.5"/><path d="M16.4,14.4 A2.1,2.1 0 1 1 14.4,12.2" fill="none" stroke="#fff" stroke-width="1.1"/><path d="M13.8,10.9 L16,12.3 L13.8,13.6 Z" fill="#fff"/></svg>
<svg class="abs" style="left:512.2px;top:31.2px" width="20" height="20" viewBox="0 0 20 20"><path d="M5.4,4 H16.0 a0.8,0.8 0 0 1 0.8,0.8 V10.6 a0.8,0.8 0 0 1 -0.8,0.8 H5.4 L2.2,7.7 Z" fill="#f3dc3c" stroke="#c2a41a" stroke-width="0.7" stroke-linejoin="round"/><text x="10.7" y="9.9" font-family="Liberation Sans" font-weight="bold" font-size="6.2" text-anchor="middle" fill="#3a3a2a">abc</text><rect x="10.6" y="10.4" width="7.6" height="7.6" rx="0.8" fill="#e3c12c" stroke="#b49318" stroke-width="0.5"/><path d="M12.4,16.4 L16.2,12.2" stroke="#fff" stroke-width="1.8" stroke-linecap="round"/></svg>
<div class="abs" style="left:539.8px;top:32.2px;width:4px;height:18px;background-image:radial-gradient(circle,#dadada 0.6px,transparent 0.8px);background-size:2px 2px;opacity:.55"></div>
<svg class="abs" style="left:548.8px;top:31.2px" width="20" height="20" viewBox="0 0 20 20"><path d="M10,1.6 V18.4 M1.6,10 H18.4" stroke="#9a9a9a" stroke-width="1.2"/><rect x="7.4" y="7.4" width="5.2" height="5.2" fill="none" stroke="#d83a2e" stroke-width="0.8" stroke-dasharray="1.6 1.2"/></svg>
<div class="abs" style="left:574.4px;top:32.2px;width:4px;height:18px;background-image:radial-gradient(circle,#dadada 0.6px,transparent 0.8px);background-size:2px 2px;opacity:.55"></div>
<div class="abs" style="left:581.0px;top:30.2px;width:22.6px;height:22.4px;background:#d9d9d9;border:1px solid #c4c4c4;border-radius:2.5px"></div>
<svg class="abs" style="left:582.4px;top:31.4px" width="20" height="20" viewBox="0 0 20 20"><g transform="rotate(225 10 10) translate(1.2 1.6) scale(0.88)"><path d="M3.4,3 H7.6 V10.4 A2.4,2.4 0 0 0 12.4,10.4 V3 H16.6 V10.4 A6.6,6.6 0 0 1 3.4,10.4 Z" fill="#d8222a" stroke="#8e1418" stroke-width="0.7"/><rect x="3.4" y="3" width="4.2" height="2.8" fill="#f4f4f4" stroke="#8e1418" stroke-width="0.6"/><rect x="12.4" y="3" width="4.2" height="2.8" fill="#f4f4f4" stroke="#8e1418" stroke-width="0.6"/></g></svg>
<svg class="abs" style="left:605.2px;top:30.6px" width="20" height="20" viewBox="0 0 20 20"><path d="M3.6,4 L8.2,14.6 L12,6 H17" fill="none" stroke="#6ab06a" stroke-width="1.1"/><g fill="#b4b4b4" stroke="#8c8c8c" stroke-width="0.5"><rect x="2.4" y="2.8" width="2.4" height="2.4"/><rect x="7" y="13.4" width="2.4" height="2.4"/><rect x="10.8" y="4.8" width="2.4" height="2.4"/><rect x="15.4" y="4.8" width="2.4" height="2.4"/></g></svg>
<svg class="abs" style="left:621.3px;top:47.6px" width="4.6" height="2.8" viewBox="0 0 4.6 2.8"><path d="M0,0 H4.6 L2.3,2.8 Z" fill="#3c3c3c"/></svg>
<svg class="abs" style="left:629.2px;top:31.2px" width="20" height="20" viewBox="0 0 20 20"><g fill="#b0b0b0" stroke="#8c8c8c" stroke-width="0.5"><rect x="5" y="3" width="2.6" height="2.6"/><rect x="13.2" y="5.2" width="2.6" height="2.6"/><rect x="9.4" y="12" width="2.6" height="2.6"/></g></svg>
<svg class="abs" style="left:644.7px;top:47.6px" width="4.6" height="2.8" viewBox="0 0 4.6 2.8"><path d="M0,0 H4.6 L2.3,2.8 Z" fill="#3c3c3c"/></svg>
<div class="abs" style="left:652px;top:33.4px;width:68.8px;height:15.2px;border:1px solid #c4c4c4;border-radius:2px;background:#fff;font-size:9.8px;line-height:13.4px;padding-left:2.6px;color:#111">12<div class="abs" style="right:0;top:0;width:10.4px;height:100%;border-left:1px solid #d8d8d8;background:linear-gradient(#fff,#efefef);border-radius:0 2px 2px 0"></div><svg class="abs" style="right:0;top:0" width="10.4" height="13.2" viewBox="0 0 10.4 13.2"><path d="M2.8,5.4 L5.2,2.6 L7.6,5.4 Z M2.8,7.8 L5.2,10.6 L7.6,7.8 Z" fill="#444"/></svg></div>
<div class="abs" style="left:722.6px;top:32.4px;width:70.6px;height:17.2px;border:1px solid #c4c4c4;border-radius:3px;background:linear-gradient(#fff,#f1f1f1);font-size:10px;line-height:15px;padding-left:3.4px;color:#111;box-shadow:0 0.5px 0.5px rgba(0,0,0,.12)">px<svg class="abs" style="right:5.2px;top:6.4px" width="6" height="3.6" viewBox="0 0 6 3.6"><path d="M0,0 H6 L3,3.6 Z" fill="#444"/></svg></div>
<svg class="abs" style="left:794.0px;top:31.2px" width="20" height="20" viewBox="0 0 20 20"><path d="M5.6,2.4 L9.8,8.4 L9.4,17.6 M9.8,8.4 L17.6,5.6" fill="none" stroke="#6ab06a" stroke-width="1.2"/><rect x="8.5" y="7.1" width="2.6" height="2.6" fill="#c0c0c0" stroke="#8a8a8a" stroke-width="0.5"/></svg>
<svg class="abs" style="left:818.0px;top:31.2px" width="20" height="20" viewBox="0 0 20 20"><path d="M3,3 L17,17 M17,3 L3,17" stroke="#6ab06a" stroke-width="1.2"/><rect x="8.7" y="8.7" width="2.6" height="2.6" fill="#c0c0c0" stroke="#8a8a8a" stroke-width="0.5"/></svg>
<svg class="abs" style="left:842.0px;top:31.2px" width="20" height="20" viewBox="0 0 20 20"><path d="M17.4,2.6 L3,17.4" stroke="#6ab06a" stroke-width="1.2"/><path d="M3.4,4.2 L10.8,8.4 L9.2,10 L16.8,15.6 L8,12.4 L9.8,10.6 Z" fill="#f5cf1e" stroke="#d8a912" stroke-width="0.5" stroke-linejoin="round"/></svg>
<svg class="abs" style="left:864.8px;top:40.0px" width="5.6" height="3.2" viewBox="0 0 5.6 3.2"><path d="M0,0 H5.6 L2.8,3.2 Z" fill="#3c3c3c"/></svg>
<div class="abs" style="left:2.5px;top:60.2px;width:4px;height:18px;background-image:radial-gradient(circle,#dadada 0.6px,transparent 0.8px);background-size:2px 2px;opacity:.55"></div>
<svg class="abs" style="left:10.6px;top:59.2px" width="20" height="20" viewBox="0 0 20 20"><path d="M3,17.4 V3.4 L16.6,17.4 Z M6,14.6 V10 L10.6,14.6 Z" fill="#dcdcdc" stroke="#c4c4c4" stroke-width="0.8" fill-rule="evenodd"/><path d="M14.6,3 H17.4 V15" fill="none" stroke="#d0d0d0" stroke-width="1"/></svg>
<svg class="abs" style="left:34.6px;top:59.2px" width="20" height="20" viewBox="0 0 20 20"><path d="M3,6.4 Q2.4,2.8 6.6,3 Q9.4,3.2 11.4,3.4 Q15.4,2.6 15.8,6 Q16,8.6 13.4,9 Q11,9 10.4,10.6 Q9.4,13 6.6,12.2 Q5.2,11.6 5.4,9.8 Q3.2,9.2 3,6.4 Z" fill="#d9d9d9" stroke="#c6c6c6" stroke-width="0.8"/><rect x="10.4" y="10.4" width="7.4" height="7.4" rx="0.8" fill="#dedede" stroke="#c4c4c4" stroke-width="0.6"/><path d="M11.8,13.4 H14.4 V11.8 L17,14.2 L14.4,16.6 V15 H11.8 Z" fill="#f6f6f6"/></svg>
<svg class="abs" style="left:57.2px;top:68.0px" width="5.6" height="3.2" viewBox="0 0 5.6 3.2"><path d="M0,0 H5.6 L2.8,3.2 Z" fill="#3c3c3c"/></svg>
<svg class="abs" style="left:66.6px;top:59.2px" width="20" height="20" viewBox="0 0 20 20"><path d="M3,6.4 Q2.4,2.8 6.6,3 Q9.4,3.2 11.4,3.4 Q15.4,2.6 15.8,6 Q16,8.6 13.4,9 Q11,9 10.4,10.6 Q9.4,13 6.6,12.2 Q5.2,11.6 5.4,9.8 Q3.2,9.2 3,6.4 Z" fill="#d9d9d9" stroke="#c6c6c6" stroke-width="0.8"/><rect x="10.4" y="10.4" width="7.4" height="7.4" rx="0.8" fill="#dedede" stroke="#c4c4c4" stroke-width="0.6"/><path d="M16.2,14.4 A2.1,2.1 0 1 1 14.2,12.2" fill="none" stroke="#f6f6f6" stroke-width="1.1"/></svg>
<svg class="abs" style="left:90.2px;top:59.2px" width="20" height="20" viewBox="0 0 20 20"><path d="M4,5 Q6,2 9.6,3.4 L14,5.6 Q17.6,8 16.4,12 L14,16.6 Q10,18.4 7,15.6 L4.4,11 Q3,8 4,5 Z" fill="#d9d9d9" stroke="#c6c6c6" stroke-width="0.8"/><path d="M6.4,5.4 L13,14.6 M10,10 L14.6,9.4" stroke="#c4c4c4" stroke-width="0.7"/></svg>
<svg class="abs" style="left:113.6px;top:59.2px" width="20" height="20" viewBox="0 0 20 20"><path d="M3,6.4 Q2.4,2.8 6.6,3 Q9.4,3.2 11.4,3.4 Q15.4,2.6 15.8,6 Q16,8.6 13.4,9 Q11,9 10.4,10.6 Q9.4,13 6.6,12.2 Q5.2,11.6 5.4,9.8 Q3.2,9.2 3,6.4 Z" fill="#d9d9d9" stroke="#c6c6c6" stroke-width="0.8"/><ellipse cx="7.6" cy="6" rx="2.8" ry="1.5" fill="#f0f0f0" stroke="#c4c4c4" stroke-width="0.6"/><rect x="10.4" y="10.4" width="7.4" height="7.4" rx="0.8" fill="#dedede" stroke="#c4c4c4" stroke-width="0.6"/><path d="M14.100000000000001,11.4 L14.100000000000001,16.8 M11.4,14.100000000000001 L16.8,14.100000000000001 M12.1,12.1 L16.1,16.1 M16.1,12.1 L12.1,16.1" stroke="#f6f6f6" stroke-width="0.95"/><circle cx="14.100000000000001" cy="14.100000000000001" r="1.3" fill="#f6f6f6"/></svg>
<svg class="abs" style="left:137.2px;top:59.2px" width="20" height="20" viewBox="0 0 20 20"><path d="M3,6.4 Q2.4,2.8 6.6,3 Q9.4,3.2 11.4,3.4 Q15.4,2.6 15.8,6 Q16,8.6 13.4,9 Q11,9 10.4,10.6 Q9.4,13 6.6,12.2 Q5.2,11.6 5.4,9.8 Q3.2,9.2 3,6.4 Z" fill="#d9d9d9" stroke="#c6c6c6" stroke-width="0.8"/><path d="M3,13.4 Q5.4,11.8 8.6,13.6 Q9.6,16 7.4,17.4 Q4,18 3,13.4 Z" fill="#d9d9d9" stroke="#c6c6c6" stroke-width="0.7"/><rect x="10.4" y="10.4" width="7.4" height="7.4" rx="0.8" fill="#dedede" stroke="#c4c4c4" stroke-width="0.6"/><path d="M14.100000000000001,11.4 L14.100000000000001,16.8 M11.4,14.100000000000001 L16.8,14.100000000000001 M12.1,12.1 L16.1,16.1 M16.1,12.1 L12.1,16.1" stroke="#f6f6f6" stroke-width="0.95"/><circle cx="14.100000000000001" cy="14.100000000000001" r="1.3" fill="#f6f6f6"/></svg>
<svg class="abs" style="left:160.8px;top:59.2px" width="20" height="20" viewBox="0 0 20 20"><path d="M3,6.4 Q2.4,2.8 6.6,3 Q9.4,3.2 11.4,3.4 Q15.4,2.6 15.8,6 Q16,8.6 13.4,9 Q11,9 10.4,10.6 Q9.4,13 6.6,12.2 Q5.2,11.6 5.4,9.8 Q3.2,9.2 3,6.4 Z" fill="#d9d9d9" stroke="#c6c6c6" stroke-width="0.8"/><ellipse cx="7.6" cy="6" rx="2.8" ry="1.5" fill="#e6e6e6" stroke="#c4c4c4" stroke-width="0.6"/><rect x="10.4" y="10.4" width="7.4" height="7.4" rx="0.8" fill="#dedede" stroke="#c4c4c4" stroke-width="0.6"/><path d="M14.100000000000001,11.4 L14.100000000000001,16.8 M11.4,14.100000000000001 L16.8,14.100000000000001 M12.1,12.1 L16.1,16.1 M16.1,12.1 L12.1,16.1" stroke="#f6f6f6" stroke-width="0.95"/><circle cx="14.100000000000001" cy="14.100000000000001" r="1.3" fill="#f6f6f6"/></svg>
<svg class="abs" style="left:184.4px;top:59.2px" width="20" height="20" viewBox="0 0 20 20"><path d="M3,6.4 Q2.4,2.8 6.6,3 Q9.4,3.2 11.4,3.4 Q15.4,2.6 15.8,6 Q16,8.6 13.4,9 Q11,9 10.4,10.6 Q9.4,13 6.6,12.2 Q5.2,11.6 5.4,9.8 Q3.2,9.2 3,6.4 Z" fill="#d9d9d9" stroke="#c6c6c6" stroke-width="0.8"/><ellipse cx="7.6" cy="6" rx="2.8" ry="1.5" fill="#f0f0f0" stroke="#c4c4c4" stroke-width="0.6"/><rect x="10.4" y="10.4" width="7.4" height="7.4" rx="0.8" fill="#dedede" stroke="#c4c4c4" stroke-width="0.6"/><path d="M12.200000000000001,12.200000000000001 L16.0,16.0 M16.0,12.200000000000001 L12.200000000000001,16.0" stroke="#f6f6f6" stroke-width="1.4"/></svg>
<svg class="abs" style="left:208.0px;top:59.2px" width="20" height="20" viewBox="0 0 20 20"><path d="M3,6.4 Q2.4,2.8 6.6,3 Q9.4,3.2 11.4,3.4 Q15.4,2.6 15.8,6 Q16,8.6 13.4,9 Q11,9 10.4,10.6 Q9.4,13 6.6,12.2 Q5.2,11.6 5.4,9.8 Q3.2,9.2 3,6.4 Z" fill="#d9d9d9" stroke="#c6c6c6" stroke-width="0.8"/><path d="M3,13.4 Q5.4,11.8 8.6,13.6 Q9.6,16 7.4,17.4 Q4,18 3,13.4 Z" fill="#d9d9d9" stroke="#c6c6c6" stroke-width="0.7"/><rect x="10.4" y="10.4" width="7.4" height="7.4" rx="0.8" fill="#dedede" stroke="#c4c4c4" stroke-width="0.6"/><path d="M12.200000000000001,12.200000000000001 L16.0,16.0 M16.0,12.200000000000001 L12.200000000000001,16.0" stroke="#f6f6f6" stroke-width="1.4"/></svg>
<svg class="abs" style="left:231.4px;top:59.2px" width="20" height="20" viewBox="0 0 20 20"><path d="M3,7 Q2.4,3 7,3.2 L13,3.4 Q17.4,3 17.2,7 Q17,10 13.6,10.2 Q11.4,10.4 11,12.6 Q10.2,17.4 6.4,16.6 Q3.4,15.8 4,12 Q2.8,10 3,7 Z" fill="#d4d4d4" stroke="#c6c6c6" stroke-width="0.8"/></svg>
<svg class="abs" style="left:255.2px;top:59.2px" width="20" height="20" viewBox="0 0 20 20"><path d="M4.4,11.4 Q6,7.6 9.6,6.4 Q12.4,2.2 16,4.2 Q18.4,7 15,10.4 Q13,14.6 9.6,15.4 Q6.4,18.6 3.8,16 Q2.4,13.8 4.4,11.4 Z" fill="#d4d4d4" stroke="#c6c6c6" stroke-width="0.8"/></svg>
<svg class="abs" style="left:278.6px;top:59.2px" width="20" height="20" viewBox="0 0 20 20"><path d="M3.4,3.6 L9,13.6 L14,4.4 H17.4" fill="none" stroke="#cacaca" stroke-width="0.9"/><g fill="#e4e4e4" stroke="#c6c6c6" stroke-width="0.5"><circle cx="3.4" cy="3.4" r="1.2"/><rect x="13" y="3.4" width="2" height="2"/><rect x="16.4" y="3.4" width="2" height="2"/></g><rect x="10.2" y="11" width="7.2" height="7.2" rx="0.8" fill="#dedede" stroke="#c4c4c4" stroke-width="0.6"/><circle cx="13.8" cy="14.6" r="2.4" fill="none" stroke="#f6f6f6" stroke-width="0.9"/><path d="M12,16.4 L15.6,12.8" stroke="#f6f6f6" stroke-width="0.9"/></svg>
<svg class="abs" style="left:302.4px;top:59.2px" width="20" height="20" viewBox="0 0 20 20"><path d="M10,1.8 V18.2 M2.4,9.4 H17.6" stroke="#cccccc" stroke-width="1"/><g fill="#f0f0f0" stroke="#c8c8c8" stroke-width="0.7"><rect x="12.6" y="2.6" width="4.4" height="4.4"/><rect x="3.2" y="12.4" width="4" height="4"/></g></svg>
<svg class="abs" style="left:325.8px;top:59.2px" width="20" height="20" viewBox="0 0 20 20"><g fill="#dcdcdc" stroke="#c8c8c8" stroke-width="0.7"><path d="M2.4,6.6 Q2.6,3 6,3 Q9.2,3.2 9.4,6.6 Q9.2,10.2 6,10.4 Q2.6,10 2.4,6.6 Z"/><path d="M10.6,6.6 Q10.8,3 14,3 Q17.4,3.2 17.6,6.6 Q17.4,10.2 14,10.4 Q10.8,10 10.6,6.6 Z"/></g><g fill="none" stroke="#cdcdcd" stroke-width="1"><path d="M8,9.6 L12,15 M12,9.6 L8,15"/><ellipse cx="7.2" cy="16.4" rx="1.3" ry="1.9" transform="rotate(25 7.2 16.4)"/><ellipse cx="12.8" cy="16.4" rx="1.3" ry="1.9" transform="rotate(-25 12.8 16.4)"/></g></svg>
<svg class="abs" style="left:349.2px;top:59.2px" width="20" height="20" viewBox="0 0 20 20"><g fill="#dcdcdc" stroke="#c8c8c8" stroke-width="0.7"><path d="M2.4,6.6 Q2.6,3 6,3 Q9.2,3.2 9.4,6.6 Q9.2,10.2 6,10.4 Q2.6,10 2.4,6.6 Z"/><path d="M10.6,6.6 Q10.8,3 14,3 Q17.4,3.2 17.6,6.6 Q17.4,10.2 14,10.4 Q10.8,10 10.6,6.6 Z"/></g><g fill="none" stroke="#cdcdcd" stroke-width="1"><path d="M8,9.6 L12,15 M12,9.6 L8,15"/><ellipse cx="7.2" cy="16.4" rx="1.3" ry="1.9" transform="rotate(25 7.2 16.4)"/><ellipse cx="12.8" cy="16.4" rx="1.3" ry="1.9" transform="rotate(-25 12.8 16.4)"/></g></svg>
<svg class="abs" style="left:372.8px;top:59.2px" width="20" height="20" viewBox="0 0 20 20"><g fill="#dcdcdc" stroke="#c8c8c8" stroke-width="0.7"><path d="M2.4,6.6 Q2.6,3 6,3 Q9.2,3.2 9.4,6.6 Q9.2,10.2 6,10.4 Q2.6,10 2.4,6.6 Z"/><path d="M10.6,6.6 Q10.8,3 14,3 Q17.4,3.2 17.6,6.6 Q17.4,10.2 14,10.4 Q10.8,10 10.6,6.6 Z"/></g><path d="M5,10 Q7,15.6 10.4,17" fill="none" stroke="#cdcdcd" stroke-width="1"/></svg>
<svg class="abs" style="left:396.6px;top:59.2px" width="20" height="20" viewBox="0 0 20 20"><path d="M10,2 V18" stroke="#d0d0d0" stroke-width="0.9"/><g stroke="#d4d4d4" stroke-width="1"><path d="M4,4.6 H16 M5,8.2 H15 M4,11.8 H16 M5,15.4 H15"/></g><g fill="#fff" stroke="#d8d8d8" stroke-width="0.5"><rect x="2.6" y="6" width="14.8" height="1.2"/><rect x="2.6" y="13" width="14.8" height="1.2"/></g></svg>
<svg class="abs" style="left:420.0px;top:59.2px" width="20" height="20" viewBox="0 0 20 20"><path d="M9.4,2.8 L16.4,7.8 L9.4,10.6 Z" fill="#dedede" stroke="#c6c6c6" stroke-width="0.7"/><path d="M9.4,2.8 V16.6 M6.4,17.2 L9.4,12.6 L12.4,17.2" fill="none" stroke="#c6c6c6" stroke-width="0.9"/><path d="M6.6,4.6 Q2.8,9 5.4,13.4" fill="none" stroke="#cdcdcd" stroke-width="0.9"/></svg>
<svg class="abs" style="left:443.0px;top:68.0px" width="5.6" height="3.2" viewBox="0 0 5.6 3.2"><path d="M0,0 H5.6 L2.8,3.2 Z" fill="#3c3c3c"/></svg>
<div class="abs" style="left:455.8px;top:60.2px;width:4px;height:18px;background-image:radial-gradient(circle,#dadada 0.6px,transparent 0.8px);background-size:2px 2px;opacity:.55"></div>
<svg class="abs" style="left:463.4px;top:58.8px" width="20" height="20" viewBox="0 0 20 20"><defs><linearGradient id="gsg" x1="0" y1="0" x2="0" y2="1"><stop offset="0" stop-color="#86c978"/><stop offset="1" stop-color="#58a84c"/></linearGradient></defs><rect x="1.4" y="1.4" width="17.2" height="17.2" fill="url(#gsg)" stroke="#8fce84" stroke-width="0.8"/><circle cx="11.4" cy="8.4" r="4.3" fill="#6cb861" stroke="#fff" stroke-width="1.5"/><path d="M8.2,11.6 L4.4,15.6" stroke="#fff" stroke-width="2" stroke-linecap="round"/></svg>
<svg class="abs" style="left:487.6px;top:59.2px" width="20" height="20" viewBox="0 0 20 20"><rect x="2.4" y="4" width="14.6" height="13.4" fill="#f4efd4" stroke="#c8c0a0" stroke-width="0.5"/><path d="M2.4,13 L8,10.6 L12,13.8 L17,12 V17.4 H2.4 Z" fill="#7fb0e0"/><path d="M2.4,4 H6.6 L5.6,7.4 L2.4,8.4 Z" fill="#6cbf6c"/><path d="M9,4 H12 L11.4,6.8 H9.4 Z" fill="#e98a8a"/><path d="M4,9.4 L7.4,8.8 L8,10.8 L5,11.4 Z" fill="#f1c9c9"/><path d="M17.4,2 L10.6,11.6" stroke="#7a4a22" stroke-width="2" stroke-linecap="round"/><path d="M10.8,11 L8.4,14.8 L11.8,12.6 Z" fill="#e8a52a" stroke="#a8701a" stroke-width="0.4"/><path d="M9.4,14.4 L14.8,17 L12.4,14 Z" fill="#3f7ec8"/></svg>
<!--/TB1-->
<!--TB2-->
<!--TB3-->
</div>
<div class="abs" style="left:0;top:98px;width:1200px;height:1px;background:#cfcfcf"></div>
<!--MAP-->
<div id="map" class="abs">
<!--MAPSVG-->
<svg width="623" height="612" viewBox="239 99 623 612" style="position:absolute;left:0;top:0" fill="none" stroke-linejoin="round">
<!-- thin solid boundaries -->
<g stroke="#2e2e2e" stroke-width="1.05">
<path d="M346,219.7 L358.6,221 L367,218.4 L371,213.6 L375.5,211.2 L381,212.6 L390,218 L403,228 L411.4,240.8 L430,261.2 L436.2,266 L453.1,269.7 L454.3,286.9 L501.8,281 L522.2,250 L548,227.5 L550.6,221.4"/>
<path d="M540.4,98 L546.2,113.2 L557.7,122 L568.4,131 L570.5,134.5 L569.8,146 L566.6,170 L562.2,198.3 L550.6,221.4"/>
<path d="M601.7,98 L601.2,109.6 L603.3,121.2 L596.8,140.7 L585.2,154.9 L568,159.3"/>
<path d="M722.2,127.4 L723.1,134.5 L727.5,146.9 L729.3,159 L760.3,149.2 L771,150.1 L770.6,214.3 L768.2,229 L767.7,247.7 L768.2,268.7 L763,287.4 L764.2,306 L770.7,324.7 L767.7,345.7 L767.2,362 L770,366.7 L780.5,371.4 L795.7,375.6 L796.2,387.7 L794.5,400 L782.1,440 L780.4,449.8 L788.3,459.7 L810.4,465.8 L822.7,473.2 L823.9,480.5"/>
<path d="M337.8,551.6 L437.9,505.2 L459.4,490.6 L484,483.5 L515.2,468.7 L533.9,459.1 L534.6,463.8"/>
<path d="M663.3,606.4 L734.8,602.7 L754.2,598.8"/>
<path d="M757,485.6 L768,483.2"/>
</g>
<!-- dashed boundaries -->
<g stroke="#2e2e2e" stroke-width="1.1" stroke-dasharray="10.5 3.2">
<path d="M239,143.4 L346,219.7"/>
<path d="M346,219.7 L326.9,259.9 L291,297.9 L252.9,336.8 L239,338"/>
<path d="M252.9,336.8 L288.8,401.5 L324,464.4 L337,550.3 L345.5,608.3 L356.3,625.5 L362.7,653.4 L388.5,711"/>
<path d="M346,218.4 L318.4,217.6 L303.6,226 L286.7,245 L283.8,259.9 L288.8,278.9 L291.8,297"/>
<path d="M654.4,98 L666,113.5 L700,119.4 L719.5,125.6 L734.6,126.1 L845.5,124.4 L862,119.4"/>
<path d="M454.3,286.9 L462.7,320 L467.8,345.5 L494.5,387.2 L520,429 L533.9,456.8 L542,490 L547.4,503.8 L573.1,566.4 L586.6,570 L600.1,568.1 L662.7,606.4 L681.1,602 L707.2,581.3 L719.5,553 L720.7,532.1 L712.1,519.1 L731.8,504.4"/>
<path d="M755.1,598.5 L771.1,560.4 L783.4,523.5 L788.3,486.7 L815.3,486.7 L823.9,480.5 L862,473.2"/>
<path d="M754.2,598.8 L757.8,628.9 L767.5,669.5 L780.7,697.8 L785.2,711"/>
</g>
<!-- roads (double line) -->
<g stroke="#333" stroke-linecap="butt">
<path stroke-width="4.6" d="M276,97.6 L312.6,101.5 L355.2,120.5 L398.8,164.2 L422,186 L437.8,200 L447.2,210.5 L466,240 L488,275.4 L504.5,320 L509.6,332 L556,401.6"/>
<path stroke-width="5.6" d="M555,400 L581.7,440 L641.6,532.6 L700,505.4 L719.5,496 L862,453.5"/>
<path stroke-width="5.4" d="M719.5,495.6 L739.1,440 L758.6,400 L841.2,229 L863,186"/>
</g>
<g stroke="#fff" stroke-linecap="butt">
<path stroke-width="2.6" d="M276,97.6 L312.6,101.5 L355.2,120.5 L398.8,164.2 L422,186 L437.8,200 L447.2,210.5 L466,240 L488,275.4 L504.5,320 L509.6,332 L556,401.6"/>
<path stroke-width="3.5" d="M555,400 L581.7,440 L641.6,532.6 L700,505.4 L719.5,496 L862,453.5"/>
<path stroke-width="3.3" d="M719.5,495.6 L739.1,440 L758.6,400 L841.2,229 L863,186"/>
</g>
<!-- buildings / water polygons -->
<rect x="821.1" y="347.6" width="24.1" height="39" fill="#d6d6d6" stroke="#8a8a8a" stroke-width="0.9"/>
<path d="M853.4,306 L864,305.4 L864,334.3 L851.3,332.4 Z" fill="#d6d6d6" stroke="#8a8a8a" stroke-width="0.9"/>
<circle cx="868" cy="260.5" r="10.2" fill="#5b9fe0"/>
<!-- water lines solid -->
<g stroke="#27a4ca" stroke-width="2.2" stroke-linecap="round">
<path d="M591.1,97 L590.6,105.2 L580.8,123.8 L567.5,159.3 L556.9,179.7 L552.4,196.6 L545.5,229 L545.8,231 L562.2,317.6 L590.1,386.4 L599.5,400 L623.4,440 L638.2,462.1 L677.4,505 L697.1,528.3 L714.6,561.6 L729.5,590 L738.3,607.7 L774.2,713"/>
<path d="M689,97.6 L734.6,125.6 L747.6,152.2"/>
</g>
<g stroke="#2fb0d6" stroke-width="2.4" stroke-linecap="butt">
<path d="M720.7,499 L734.6,498.4"/><path d="M728.6,498.6 L733,513.4"/>
</g>
<!-- water lines dashed -->
<g stroke="#31b2d8" stroke-width="2.25" stroke-dasharray="13.5 3.6">
<path d="M852,176.5 L863,179"/>
<path d="M771.9,172.6 L748.8,189.5 L701.8,189.1 L612.7,190.9 L590,200 L570,206.4 L552.4,215 L511.6,240 L491.7,231.6 L454,266.5 L439.8,298.4"/>
<path d="M349.3,291.4 L430,300.8 L474.3,306 L483.2,330 L522.3,436 L540,464.5 L549,490 L564.5,523.4 L597.7,553.6 L661.5,536.2 L700,518 L716,509"/>
<path d="M693.7,512.5 L719.5,501.4 L771.1,485.5 L862,464.6"/>
</g>
<g stroke="#31b2d8" stroke-width="1.7" stroke-dasharray="8 2.2 1.6 2.2">
<path d="M502.1,444.5 L521.2,436.6"/>
</g>
<rect x="521.8" y="432.7" width="6.2" height="6.2" stroke="#31b2d8" stroke-width="1.5" transform="rotate(-18 524.9 435.8)"/>
<!-- electricity lines -->
<g stroke="#d1a836" stroke-width="2">
<path d="M349.3,287.3 L430,297.2 L483.2,303.2 L493.9,330 L535.1,444.1 L554.8,490 L568.2,522.2 L598.4,549.7 L660.2,532.8 L700,513.1 L721.9,502.7 L732.3,513.7 L740.4,497 L764.9,491.6 L807.9,480.5 L862,467.5"/>
</g>
<g fill="#d1a836">
<circle cx="349.3" cy="287.3" r="3.3"/><circle cx="483.2" cy="303.2" r="3.4"/><circle cx="535.8" cy="444.1" r="3"/>
<circle cx="568.2" cy="522.2" r="3.2"/><circle cx="598.4" cy="549.7" r="3.2"/><circle cx="660.2" cy="532.8" r="3.2"/>
<circle cx="721.9" cy="502.7" r="2.8"/><circle cx="732.3" cy="513.7" r="2.8"/><circle cx="740.4" cy="497" r="2.8"/>
<circle cx="764.9" cy="491.6" r="3.1"/><circle cx="807.9" cy="480.5" r="3.1"/>
</g>
<!-- labels -->
<g font-family="Liberation Sans, sans-serif" font-weight="bold" font-size="8.8" fill="#1c1c1c" text-anchor="middle" stroke="none">
<circle cx="383.5" cy="376.3" r="8.8" fill="#b9ca4b"/><text x="383.5" y="379.5">18</text>
<circle cx="644.3" cy="344.9" r="8.8" fill="#b9ca4b"/><text x="644.3" y="348.1">14</text>
<circle cx="744.5" cy="547.6" r="8.8" fill="#b9ca4b"/><text x="744.5" y="550.8">6</text>
<circle cx="862.6" cy="304.3" r="8.8" fill="#b9ca4b"/><text x="861.2" y="307.5">1</text>
</g>
<!-- annotation box -->
<rect x="774" y="136.6" width="77.6" height="49.2" fill="#fff" stroke="#2a2a2a" stroke-width="1"/>
<g font-family="Liberation Sans, sans-serif" font-size="12.4" fill="#111" stroke="#111" stroke-width="0.28">
<text x="777.4" y="150.9">#&#160;fields</text><text x="777.4" y="165.4">"name"</text><text x="777.4" y="179.8">notes</text>
</g>
</svg>

<!--/MAPSVG-->
</div>
<div class="abs" style="left:238px;top:99px;width:1px;height:612px;background:#d0d0d0"></div>
<!--LAYERS-->
<div id="layers" class="abs">
<!--LAYERSBODY-->
<div class="abs" style="left:3px;top:1.7px;font-size:8.5px;line-height:11px;color:#222">Layers</div>
<svg class="abs" style="left:215px;top:2.5px" width="19" height="9" viewBox="0 0 19 9"><rect x="0.5" y="0.5" width="7.4" height="7.4" rx="1.4" fill="none" stroke="#555" stroke-width="0.7"/><rect x="3.4" y="1.8" width="3.2" height="2.8" fill="none" stroke="#555" stroke-width="0.6"/><rect x="1.9" y="3.6" width="3.2" height="2.8" fill="#ececec" stroke="#555" stroke-width="0.6"/><rect x="10.3" y="0.5" width="7.4" height="7.4" rx="1.4" fill="none" stroke="#555" stroke-width="0.7"/><path d="M12,2.2 L16,6.2 M16,2.2 L12,6.2" stroke="#333" stroke-width="1.3"/></svg>
<!--LAYERTB-->
<div class="abs" style="left:3.2px;top:16.599999999999994px;width:17px;height:16.2px;background:#dadada;border:1px solid #c4c4c4;border-radius:2.5px"></div>
<svg class="abs" style="left:4.6px;top:17.8px" width="14" height="14" viewBox="0 0 14 14"><path d="M1.6,7.4 L5.2,5.4 L8.6,7 L8.6,10.4 L5,12.6 L1.6,10.8 Z" fill="#d94a3a"/><path d="M1.6,7.4 L5,9.2 V12.6 L1.6,10.8 Z" fill="#3f7fc8"/><path d="M5,9.2 L8.6,7 V10.4 L5,12.6 Z" fill="#f0d23c"/><path d="M12.6,1.4 L7.4,7" stroke="#c8963a" stroke-width="1.5" stroke-linecap="round"/><path d="M7.4,5.8 L9,7.4 L6.6,10.6 Q4.8,10.8 4.8,9 Z" fill="#f4dc9c" stroke="#c29a4a" stroke-width="0.4"/></svg>
<svg class="abs" style="left:22.2px;top:17.8px" width="14" height="14" viewBox="0 0 14 14"><path d="M3,11.6 V5.2 L5.4,2.8 V9.4 Z M5.8,10.6 V3.6 L8,1.6 H9.8 V8.6 L7.6,10.6 Z M10.2,9.4 V3 H11.6 V9.4 Z" fill="#dcdcdc" stroke="#8a8a8a" stroke-width="0.6"/><rect x="8.2" y="8.6" width="4.6" height="4.6" fill="#f4f4f4" stroke="#6aa86a" stroke-width="0.5"/><path d="M10.5,9.4 V12.4 M9,10.9 H12" stroke="#3a9a3a" stroke-width="1.1"/></svg>
<svg class="abs" style="left:40.7px;top:19.9px" width="13" height="9" viewBox="0 0 13 9"><path d="M0.8,4.6 Q6.4,-1.6 12.2,4.6 Q6.4,10.4 0.8,4.6 Z" fill="#fff" stroke="#8a8a8a" stroke-width="0.7"/><circle cx="6.4" cy="4.4" r="2.5" fill="#4a80c0"/><circle cx="6.4" cy="4.4" r="1" fill="#1c2c4c"/></svg>
<svg class="abs" style="left:50.4px;top:28.0px" width="4.4" height="2.8" viewBox="0 0 4.4 2.8"><path d="M0,0 H4.4 L2.2,2.8 Z" fill="#444"/></svg>
<svg class="abs" style="left:58.3px;top:17.8px" width="13" height="14" viewBox="0 0 13 14"><path d="M1,1.6 H12 L7.8,7.2 V12.6 L5.2,11 V7.2 Z" fill="#4a8ad0" stroke="#2f6ab0" stroke-width="0.6" stroke-linejoin="round"/><path d="M1,1.6 H12 L11,3 H2 Z" fill="#f0d23c" stroke="#c8a81c" stroke-width="0.4"/></svg>
<svg class="abs" style="left:76.9px;top:17.8px" width="13" height="14" viewBox="0 0 13 14"><text x="0.6" y="8.6" font-family="Liberation Serif" font-size="11" fill="#333">&#949;</text><path d="M6.4,12.6 V8.6 H11.2 V12.6" fill="none" stroke="#555" stroke-width="1"/></svg>
<svg class="abs" style="left:92.8px;top:22.8px" width="6" height="3.6" viewBox="0 0 6 3.6"><path d="M0,0 H6 L3,3.6 Z" fill="#3c3c3c"/></svg>
<svg class="abs" style="left:102.6px;top:17.8px" width="14" height="14" viewBox="0 0 14 14"><rect x="1.4" y="1.6" width="5.4" height="11" fill="#fbf6e0" stroke="#b8b8b8" stroke-width="0.5"/><path d="M2.6,4 H5.4 M2.6,7 H5.4 M2.6,10 H5.4" stroke="#e8a83a" stroke-width="1.2"/><path d="M8,1.4 H11.2 V7.2 H13.2 L9.6,12.8 L6,7.2 H8 Z" fill="#3f7fc8" stroke="#2a5fa0" stroke-width="0.5" stroke-linejoin="round"/></svg>
<svg class="abs" style="left:120.4px;top:17.8px" width="14" height="14" viewBox="0 0 14 14"><rect x="1.4" y="1.6" width="5.4" height="11" fill="#fbf6e0" stroke="#b8b8b8" stroke-width="0.5"/><path d="M2.6,4 H5.4 M2.6,7 H5.4 M2.6,10 H5.4" stroke="#e8a83a" stroke-width="1.2"/><path d="M8,12.8 H11.2 V7 H13.2 L9.6,1.4 L6,7 H8 Z" fill="#3f7fc8" stroke="#2a5fa0" stroke-width="0.5" stroke-linejoin="round"/></svg>
<svg class="abs" style="left:137.8px;top:17.8px" width="14" height="14" viewBox="0 0 14 14"><rect x="2" y="2" width="8.6" height="8.6" rx="0.8" fill="#f2f2f2" stroke="#d2d2d2" stroke-width="0.8"/><rect x="8.4" y="9.6" width="4.4" height="2.4" rx="1" fill="#f4f4f4" stroke="#d2d2d2" stroke-width="0.7"/></svg>
<!--/LAYERTB-->
<div class="abs" style="left:1px;top:36px;width:233px;height:557.4px;background:#fff;border:1px solid #d0d0d0;border-top-color:#c4c4c4"></div>
<div class="row off" style="top:36.40px;left:0;width:234px"><span class="cb" style="left:17px;top:1.5px"></span><span class="abs" style="left:31.5px;top:0.5px;width:12px;height:12px"><svg width="12" height="12" viewBox="0 0 12 12"><circle cx="6" cy="6" r="4.6" fill="#fff" stroke="#555" stroke-width="0.8"/><circle cx="6" cy="4.9" r="1.3" fill="#333"/><path d="M3.4,8 Q6,5.6 8.6,8 Z" fill="#333"/></svg></span><span class="abs" style="left:47.5px;top:0;">Water Points</span></div>
<div class="row off" style="top:49.25px;left:0;width:234px"><svg class="abs" style="left:5px;top:3.5px" width="5" height="6" viewBox="0 0 5 6"><path d="M0.8,0.5 L4.2,3 L0.8,5.5 Z" fill="#444"/></svg><span class="cb" style="left:17px;top:1.5px"></span><span class="abs" style="left:31.5px;top:0.5px;width:12px;height:12px"><svg width="12" height="12" viewBox="0 0 12 12"><circle cx="2.5" cy="9.5" r="0.8" fill="#555"/><circle cx="5" cy="4.5" r="0.8" fill="#555"/><circle cx="9.5" cy="2" r="0.8" fill="#555"/></svg></span><span class="abs" style="left:47.5px;top:0;">Vegetation points [301]</span><svg class="abs" style="left:218.6px;top:0.6px" width="11" height="12" viewBox="0 0 11 12"><rect x="0.3" y="0.3" width="10.4" height="11.4" rx="2" fill="#f7f7f7" stroke="#ededed" stroke-width="0.5"/><path d="M3.3,5.4 V3.8 a2.2,2.2 0 0 1 4.4,0 V5.4" fill="none" stroke="#8a8a8a" stroke-width="0.9"/><rect x="2.2" y="5.3" width="6.6" height="4.8" rx="0.8" fill="#fdfdfd" stroke="#8a8a8a" stroke-width="0.9"/></svg></div>
<div class="row off" style="top:62.09px;left:0;width:234px"><span class="cb" style="left:17px;top:1.5px"></span><span class="abs" style="left:31.5px;top:0.5px;width:12px;height:12px"><svg width="12" height="12" viewBox="0 0 12 12"><circle cx="6" cy="6" r="3.2" fill="#0a1a0a"/></svg></span><span class="abs" style="left:47.5px;top:0;">Points of Interest</span><svg class="abs" style="left:218.6px;top:0.6px" width="11" height="12" viewBox="0 0 11 12"><rect x="0.3" y="0.3" width="10.4" height="11.4" rx="2" fill="#f7f7f7" stroke="#ededed" stroke-width="0.5"/><path d="M3.3,5.4 V3.8 a2.2,2.2 0 0 1 4.4,0 V5.4" fill="none" stroke="#8a8a8a" stroke-width="0.9"/><rect x="2.2" y="5.3" width="6.6" height="4.8" rx="0.8" fill="#fdfdfd" stroke="#8a8a8a" stroke-width="0.9"/></svg></div>
<div class="row" style="top:74.94px;left:0;width:234px"><svg class="abs" style="left:5px;top:3.5px" width="5" height="6" viewBox="0 0 5 6"><path d="M0.8,0.5 L4.2,3 L0.8,5.5 Z" fill="#444"/></svg><span class="cb" style="left:17px;top:1.5px"><svg viewBox="0 0 10 10" style="overflow:visible"><path d="M2.2 5 L4.4 7.9 L8.5 1.5" fill="none" stroke="#161616" stroke-width="1.5" stroke-linecap="round" stroke-linejoin="round"/></svg></span><span class="abs" style="left:31.5px;top:0.5px;width:12px;height:12px"><svg width="12" height="12" viewBox="0 0 12 12"><path d="M1,2.2 L4.6,10.6 L8.4,2.2" fill="none" stroke="#444" stroke-width="0.9"/><circle cx="10.2" cy="2" r="0.8" fill="#555"/></svg></span><span class="abs" style="left:47.5px;top:0;">Water Lines</span></div>
<div class="row" style="top:87.78px;left:0;width:234px"><span class="cb" style="left:17px;top:1.5px"><svg viewBox="0 0 10 10" style="overflow:visible"><path d="M2.2 5 L4.4 7.9 L8.5 1.5" fill="none" stroke="#161616" stroke-width="1.5" stroke-linecap="round" stroke-linejoin="round"/></svg></span><span class="abs" style="left:31.5px;top:0.5px;width:12px;height:12px"><svg width="12" height="12" viewBox="0 0 12 12"><path d="M1,6 H11 M1.3,3.6 V8.4 M10.7,3.6 V8.4" stroke="#e0b42a" stroke-width="1.7" fill="none"/></svg></span><span class="abs" style="left:47.5px;top:0;">Electricity Lines</span></div>
<div class="row" style="top:100.63px;left:0;width:234px"><span class="cb" style="left:17px;top:1.5px"><svg viewBox="0 0 10 10" style="overflow:visible"><path d="M2.2 5 L4.4 7.9 L8.5 1.5" fill="none" stroke="#161616" stroke-width="1.5" stroke-linecap="round" stroke-linejoin="round"/></svg></span><span class="abs" style="left:31.5px;top:0.5px;width:12px;height:12px"><svg width="12" height="12" viewBox="0 0 12 12"><path d="M0.5,4.6 H11.5 M0.5,7.6 H11.5" stroke="#666" stroke-width="0.9"/></svg></span><span class="abs" style="left:47.5px;top:0;">Paths</span></div>
<div class="row" style="top:113.47px;left:0;width:234px"><span class="cb" style="left:17px;top:1.5px"><svg viewBox="0 0 10 10" style="overflow:visible"><path d="M2.2 5 L4.4 7.9 L8.5 1.5" fill="none" stroke="#161616" stroke-width="1.5" stroke-linecap="round" stroke-linejoin="round"/></svg></span><span class="abs" style="left:31.5px;top:0.5px;width:12px;height:12px"><svg width="12" height="12" viewBox="0 0 12 12"><rect x="0.6" y="0.6" width="10.8" height="10.8" fill="#d4d4d4" stroke="#a9a9a9" stroke-width="0.8"/></svg></span><span class="abs" style="left:47.5px;top:0;">Buildings</span><svg class="abs" style="left:218.6px;top:0.6px" width="11" height="12" viewBox="0 0 11 12"><rect x="0.3" y="0.3" width="10.4" height="11.4" rx="2" fill="#f7f7f7" stroke="#ededed" stroke-width="0.5"/><path d="M3.3,5.4 V3.8 a2.2,2.2 0 0 1 4.4,0 V5.4" fill="none" stroke="#8a8a8a" stroke-width="0.9"/><rect x="2.2" y="5.3" width="6.6" height="4.8" rx="0.8" fill="#fdfdfd" stroke="#8a8a8a" stroke-width="0.9"/></svg></div>
<div class="row" style="top:126.31px;left:0;width:234px"><span class="cb" style="left:17px;top:1.5px"><svg viewBox="0 0 10 10" style="overflow:visible"><path d="M2.2 5 L4.4 7.9 L8.5 1.5" fill="none" stroke="#161616" stroke-width="1.5" stroke-linecap="round" stroke-linejoin="round"/></svg></span><span class="abs" style="left:31.5px;top:0.5px;width:12px;height:12px"><svg width="12" height="12" viewBox="0 0 12 12"><defs><radialGradient id="wpg"><stop offset="0" stop-color="#a6cff2"/><stop offset="1" stop-color="#4f94d4"/></radialGradient></defs><rect x="0.4" y="0.4" width="11.2" height="11.2" fill="url(#wpg)" stroke="#5b9fdb" stroke-width="0.8"/></svg></span><span class="abs" style="left:47.5px;top:0;">Water Polygons</span><svg class="abs" style="left:218.6px;top:0.6px" width="11" height="12" viewBox="0 0 11 12"><rect x="0.3" y="0.3" width="10.4" height="11.4" rx="2" fill="#f7f7f7" stroke="#ededed" stroke-width="0.5"/><path d="M3.3,5.4 V3.8 a2.2,2.2 0 0 1 4.4,0 V5.4" fill="none" stroke="#8a8a8a" stroke-width="0.9"/><rect x="2.2" y="5.3" width="6.6" height="4.8" rx="0.8" fill="#fdfdfd" stroke="#8a8a8a" stroke-width="0.9"/></svg></div>
<div class="abs" style="left:0;top:138.96px;width:233px;height:13.2px;background:#d6d6d6"></div>
<div class="row" style="top:139.16px;left:0;width:234px"><span class="cb" style="left:17px;top:1.5px"><svg viewBox="0 0 10 10" style="overflow:visible"><path d="M2.2 5 L4.4 7.9 L8.5 1.5" fill="none" stroke="#161616" stroke-width="1.5" stroke-linecap="round" stroke-linejoin="round"/></svg></span><span class="abs" style="left:31.5px;top:0.5px;width:12px;height:12px"><svg width="12" height="12" viewBox="0 0 12 12"><path d="M0.8,4 V10.4 M11,4 V10.4 M0.8,7.2 H3.6 M5,7.2 H7.4 M8.8,7.2 H11" stroke="#6a6a72" stroke-width="0.9" fill="none"/></svg></span><span class="abs" style="left:47.5px;top:0;text-decoration:underline;">Camps [20]</span><svg class="abs" style="left:218.6px;top:0.6px" width="11" height="12" viewBox="0 0 11 12"><rect x="0.3" y="0.3" width="10.4" height="11.4" rx="2" fill="#f7f7f7" stroke="#ededed" stroke-width="0.5"/><path d="M3.3,5.4 V3.8 a2.2,2.2 0 0 1 4.4,0 V5.4" fill="none" stroke="#8a8a8a" stroke-width="0.9"/><rect x="2.2" y="5.3" width="6.6" height="4.8" rx="0.8" fill="#fdfdfd" stroke="#8a8a8a" stroke-width="0.9"/></svg></div>
<div class="row off" style="top:152.00px;left:0;width:234px"><span class="cb" style="left:17px;top:1.5px"></span><span class="abs" style="left:31.5px;top:0.5px;width:12px;height:12px"><svg width="12" height="12" viewBox="0 0 12 12"><rect x="0.7" y="0.7" width="10.6" height="10.6" fill="#fff" stroke="#b02030" stroke-width="1.1"/><path d="M4.2,0.7 V11.3 M7.8,0.7 V11.3 M0.7,4.2 H11.3 M0.7,7.8 H11.3" stroke="#b02030" stroke-width="0.9"/></svg></span><span class="abs" style="left:47.5px;top:0;">Clearing Plan</span><svg class="abs" style="left:218.6px;top:0.6px" width="11" height="12" viewBox="0 0 11 12"><rect x="0.3" y="0.3" width="10.4" height="11.4" rx="2" fill="#f7f7f7" stroke="#ededed" stroke-width="0.5"/><path d="M3.3,5.4 V3.8 a2.2,2.2 0 0 1 4.4,0 V5.4" fill="none" stroke="#8a8a8a" stroke-width="0.9"/><rect x="2.2" y="5.3" width="6.6" height="4.8" rx="0.8" fill="#fdfdfd" stroke="#8a8a8a" stroke-width="0.9"/></svg></div>
<div class="row off" style="top:164.85px;left:0;width:234px"><span class="cb" style="left:17px;top:1.5px"></span><span class="abs" style="left:31.5px;top:0.5px;width:12px;height:12px"><svg width="12" height="12" viewBox="0 0 12 12"><path d="M0.8,1 V10.6 H4 M6,10.6 H8 M11,3 V10" stroke="#777" stroke-width="0.8" fill="none"/></svg></span><span class="abs" style="left:47.5px;top:0;">Area Of Interest</span></div>
<div class="row grp" style="top:177.70px;left:0;width:234px"><svg class="abs" style="left:4px;top:4.5px" width="6" height="5" viewBox="0 0 6 5"><path d="M0.4,0.8 L5.6,0.8 L3,4.2 Z" fill="#444"/></svg><span class="cb" style="left:17px;top:1.5px"><svg viewBox="0 0 10 10" style="overflow:visible"><path d="M2.2 5 L4.4 7.9 L8.5 1.5" fill="none" stroke="#161616" stroke-width="1.5" stroke-linecap="round" stroke-linejoin="round"/></svg></span><span class="abs" style="left:31.5px;top:0.5px;width:12px;height:12px"><svg width="12" height="12" viewBox="0 0 12 12"><path d="M2,11 V4.4 L4,2.6 V9.2 Z M4.6,10.4 V3 L6.6,1.2 H8.2 V8.6 L6.4,10.4 Z M8.8,9 V2.6 H10.2 V9 Z" fill="#e4e4e4" stroke="#777" stroke-width="0.7"/></svg></span><span class="abs" style="left:47.5px;top:0;">Lookup Tables</span></div>
<div class="row" style="top:190.54px;left:0;width:234px"><span class="abs" style="left:31.5px;top:0.5px;width:12px;height:12px"><svg width="12" height="12" viewBox="0 0 12 12"><rect x="0.8" y="0.6" width="10.4" height="10.8" rx="0.8" fill="#f4f4f4" stroke="#9a9a9a" stroke-width="0.8"/><path d="M0.8,3.2 H11.2 M2.6,5.2 H4.6 M5.8,5.2 H9.6 M2.6,7.2 H4.6 M5.8,7.2 H9.6 M2.6,9.2 H4.6 M5.8,9.2 H9.6" stroke="#9a9a9a" stroke-width="0.8"/></svg></span><span class="abs" style="left:47.5px;top:0;">wall_type</span></div>
<div class="row" style="top:203.39px;left:0;width:234px"><span class="abs" style="left:31.5px;top:0.5px;width:12px;height:12px"><svg width="12" height="12" viewBox="0 0 12 12"><rect x="0.8" y="0.6" width="10.4" height="10.8" rx="0.8" fill="#f4f4f4" stroke="#9a9a9a" stroke-width="0.8"/><path d="M0.8,3.2 H11.2 M2.6,5.2 H4.6 M5.8,5.2 H9.6 M2.6,7.2 H4.6 M5.8,7.2 H9.6 M2.6,9.2 H4.6 M5.8,9.2 H9.6" stroke="#9a9a9a" stroke-width="0.8"/></svg></span><span class="abs" style="left:47.5px;top:0;">landuse_lookup</span><svg class="abs" style="left:218.6px;top:0.6px" width="11" height="12" viewBox="0 0 11 12"><rect x="0.3" y="0.3" width="10.4" height="11.4" rx="2" fill="#f7f7f7" stroke="#ededed" stroke-width="0.5"/><path d="M3.3,5.4 V3.8 a2.2,2.2 0 0 1 4.4,0 V5.4" fill="none" stroke="#8a8a8a" stroke-width="0.9"/><rect x="2.2" y="5.3" width="6.6" height="4.8" rx="0.8" fill="#fdfdfd" stroke="#8a8a8a" stroke-width="0.9"/></svg></div>
<div class="row" style="top:216.23px;left:0;width:234px"><span class="abs" style="left:31.5px;top:0.5px;width:12px;height:12px"><svg width="12" height="12" viewBox="0 0 12 12"><rect x="0.8" y="0.6" width="10.4" height="10.8" rx="0.8" fill="#f4f4f4" stroke="#9a9a9a" stroke-width="0.8"/><path d="M0.8,3.2 H11.2 M2.6,5.2 H4.6 M5.8,5.2 H9.6 M2.6,7.2 H4.6 M5.8,7.2 H9.6 M2.6,9.2 H4.6 M5.8,9.2 H9.6" stroke="#9a9a9a" stroke-width="0.8"/></svg></span><span class="abs" style="left:47.5px;top:0;">electric_line_types</span><svg class="abs" style="left:218.6px;top:0.6px" width="11" height="12" viewBox="0 0 11 12"><rect x="0.3" y="0.3" width="10.4" height="11.4" rx="2" fill="#f7f7f7" stroke="#ededed" stroke-width="0.5"/><path d="M3.3,5.4 V3.8 a2.2,2.2 0 0 1 4.4,0 V5.4" fill="none" stroke="#8a8a8a" stroke-width="0.9"/><rect x="2.2" y="5.3" width="6.6" height="4.8" rx="0.8" fill="#fdfdfd" stroke="#8a8a8a" stroke-width="0.9"/></svg></div>
<div class="row" style="top:229.08px;left:0;width:234px"><span class="abs" style="left:31.5px;top:0.5px;width:12px;height:12px"><svg width="12" height="12" viewBox="0 0 12 12"><rect x="0.8" y="0.6" width="10.4" height="10.8" rx="0.8" fill="#f4f4f4" stroke="#9a9a9a" stroke-width="0.8"/><path d="M0.8,3.2 H11.2 M2.6,5.2 H4.6 M5.8,5.2 H9.6 M2.6,7.2 H4.6 M5.8,7.2 H9.6 M2.6,9.2 H4.6 M5.8,9.2 H9.6" stroke="#9a9a9a" stroke-width="0.8"/></svg></span><span class="abs" style="left:47.5px;top:0;">infrastructure_type</span><svg class="abs" style="left:218.6px;top:0.6px" width="11" height="12" viewBox="0 0 11 12"><rect x="0.3" y="0.3" width="10.4" height="11.4" rx="2" fill="#f7f7f7" stroke="#ededed" stroke-width="0.5"/><path d="M3.3,5.4 V3.8 a2.2,2.2 0 0 1 4.4,0 V5.4" fill="none" stroke="#8a8a8a" stroke-width="0.9"/><rect x="2.2" y="5.3" width="6.6" height="4.8" rx="0.8" fill="#fdfdfd" stroke="#8a8a8a" stroke-width="0.9"/></svg></div>
<div class="row" style="top:241.92px;left:0;width:234px"><span class="abs" style="left:31.5px;top:0.5px;width:12px;height:12px"><svg width="12" height="12" viewBox="0 0 12 12"><rect x="0.8" y="0.6" width="10.4" height="10.8" rx="0.8" fill="#f4f4f4" stroke="#9a9a9a" stroke-width="0.8"/><path d="M0.8,3.2 H11.2 M2.6,5.2 H4.6 M5.8,5.2 H9.6 M2.6,7.2 H4.6 M5.8,7.2 H9.6 M2.6,9.2 H4.6 M5.8,9.2 H9.6" stroke="#9a9a9a" stroke-width="0.8"/></svg></span><span class="abs" style="left:47.5px;top:0;">plant_activity</span><svg class="abs" style="left:218.6px;top:0.6px" width="11" height="12" viewBox="0 0 11 12"><rect x="0.3" y="0.3" width="10.4" height="11.4" rx="2" fill="#f7f7f7" stroke="#ededed" stroke-width="0.5"/><path d="M3.3,5.4 V3.8 a2.2,2.2 0 0 1 4.4,0 V5.4" fill="none" stroke="#8a8a8a" stroke-width="0.9"/><rect x="2.2" y="5.3" width="6.6" height="4.8" rx="0.8" fill="#fdfdfd" stroke="#8a8a8a" stroke-width="0.9"/></svg></div>
<div class="row" style="top:254.76px;left:0;width:234px"><span class="cb" style="left:32px;top:1.5px"><svg viewBox="0 0 10 10" style="overflow:visible"><path d="M2.2 5 L4.4 7.9 L8.5 1.5" fill="none" stroke="#161616" stroke-width="1.5" stroke-linecap="round" stroke-linejoin="round"/></svg></span><span class="abs" style="left:46.5px;top:0.5px;width:12px;height:12px"><svg width="12" height="12" viewBox="0 0 12 12"><circle cx="5" cy="6" r="1.5" fill="#c8641e" stroke="#6a3a10" stroke-width="0.5"/></svg></span><span class="abs" style="left:61px;top:0;">plant_type</span><svg class="abs" style="left:218.6px;top:0.6px" width="11" height="12" viewBox="0 0 11 12"><rect x="0.3" y="0.3" width="10.4" height="11.4" rx="2" fill="#f7f7f7" stroke="#ededed" stroke-width="0.5"/><path d="M3.3,5.4 V3.8 a2.2,2.2 0 0 1 4.4,0 V5.4" fill="none" stroke="#8a8a8a" stroke-width="0.9"/><rect x="2.2" y="5.3" width="6.6" height="4.8" rx="0.8" fill="#fdfdfd" stroke="#8a8a8a" stroke-width="0.9"/></svg></div>
<div class="row" style="top:267.61px;left:0;width:234px"><span class="abs" style="left:31.5px;top:0.5px;width:12px;height:12px"><svg width="12" height="12" viewBox="0 0 12 12"><rect x="0.8" y="0.6" width="10.4" height="10.8" rx="0.8" fill="#f4f4f4" stroke="#9a9a9a" stroke-width="0.8"/><path d="M0.8,3.2 H11.2 M2.6,5.2 H4.6 M5.8,5.2 H9.6 M2.6,7.2 H4.6 M5.8,7.2 H9.6 M2.6,9.2 H4.6 M5.8,9.2 H9.6" stroke="#9a9a9a" stroke-width="0.8"/></svg></span><span class="abs" style="left:47.5px;top:0;">vw_plant_counts</span><svg class="abs" style="left:218.6px;top:0.6px" width="11" height="12" viewBox="0 0 11 12"><rect x="0.3" y="0.3" width="10.4" height="11.4" rx="2" fill="#f7f7f7" stroke="#ededed" stroke-width="0.5"/><path d="M3.3,5.4 V3.8 a2.2,2.2 0 0 1 4.4,0 V5.4" fill="none" stroke="#8a8a8a" stroke-width="0.9"/><rect x="2.2" y="5.3" width="6.6" height="4.8" rx="0.8" fill="#fdfdfd" stroke="#8a8a8a" stroke-width="0.9"/></svg></div>
<div class="row" style="top:280.46px;left:0;width:234px"><span class="abs" style="left:31.5px;top:0.5px;width:12px;height:12px"><svg width="12" height="12" viewBox="0 0 12 12"><rect x="0.8" y="0.6" width="10.4" height="10.8" rx="0.8" fill="#f4f4f4" stroke="#9a9a9a" stroke-width="0.8"/><path d="M0.8,3.2 H11.2 M2.6,5.2 H4.6 M5.8,5.2 H9.6 M2.6,7.2 H4.6 M5.8,7.2 H9.6 M2.6,9.2 H4.6 M5.8,9.2 H9.6" stroke="#9a9a9a" stroke-width="0.8"/></svg></span><span class="abs" style="left:47.5px;top:0;">water_source_lookup</span></div>
<div class="row" style="top:293.30px;left:0;width:234px"><span class="abs" style="left:31.5px;top:0.5px;width:12px;height:12px"><svg width="12" height="12" viewBox="0 0 12 12"><rect x="0.8" y="0.6" width="10.4" height="10.8" rx="0.8" fill="#f4f4f4" stroke="#9a9a9a" stroke-width="0.8"/><path d="M0.8,3.2 H11.2 M2.6,5.2 H4.6 M5.8,5.2 H9.6 M2.6,7.2 H4.6 M5.8,7.2 H9.6 M2.6,9.2 H4.6 M5.8,9.2 H9.6" stroke="#9a9a9a" stroke-width="0.8"/></svg></span><span class="abs" style="left:47.5px;top:0;">water_point_type</span></div>
<div class="row" style="top:306.14px;left:0;width:234px"><span class="abs" style="left:31.5px;top:0.5px;width:12px;height:12px"><svg width="12" height="12" viewBox="0 0 12 12"><rect x="0.8" y="0.6" width="10.4" height="10.8" rx="0.8" fill="#f4f4f4" stroke="#9a9a9a" stroke-width="0.8"/><path d="M0.8,3.2 H11.2 M2.6,5.2 H4.6 M5.8,5.2 H9.6 M2.6,7.2 H4.6 M5.8,7.2 H9.6 M2.6,9.2 H4.6 M5.8,9.2 H9.6" stroke="#9a9a9a" stroke-width="0.8"/></svg></span><span class="abs" style="left:47.5px;top:0;">water_line_type</span><svg class="abs" style="left:218.6px;top:0.6px" width="11" height="12" viewBox="0 0 11 12"><rect x="0.3" y="0.3" width="10.4" height="11.4" rx="2" fill="#f7f7f7" stroke="#ededed" stroke-width="0.5"/><path d="M3.3,5.4 V3.8 a2.2,2.2 0 0 1 4.4,0 V5.4" fill="none" stroke="#8a8a8a" stroke-width="0.9"/><rect x="2.2" y="5.3" width="6.6" height="4.8" rx="0.8" fill="#fdfdfd" stroke="#8a8a8a" stroke-width="0.9"/></svg></div>
<div class="row off" style="top:318.99px;left:0;width:234px"><svg class="abs" style="left:4px;top:4.5px" width="6" height="5" viewBox="0 0 6 5"><path d="M0.4,0.8 L5.6,0.8 L3,4.2 Z" fill="#444"/></svg><span class="cb" style="left:17px;top:1.5px"></span><span class="abs" style="left:31.5px;top:0.5px;width:12px;height:12px"><svg width="12" height="12" viewBox="0 0 12 12"><rect x="1" y="1.4" width="3.4" height="3.4" fill="#1a3a6a"/><rect x="7.4" y="1" width="3.2" height="3.2" fill="#1a3a6a"/><rect x="4.2" y="4.4" width="3.4" height="3.4" fill="#2a5a9a"/><rect x="1.4" y="7.6" width="3" height="3" fill="#1a3a6a"/><rect x="7.6" y="7.6" width="3" height="3" fill="#6a8aba"/></svg></span><span class="abs" style="left:47.5px;top:0;">Google Satellite</span></div>
<div class="abs" style="left:46.4px;top:593.4px;width:67px;height:16.4px;background:#d8d8d8;border:1px solid #c4c4c4;border-top:0;border-radius:0 0 3px 3px;font-size:9.6px;line-height:15px;text-align:center;color:#222;padding-right:1.6px">Browser (2)</div>
<div class="abs" style="left:1px;top:592.4px;width:45.6px;height:19px;background:#ececec;border:1px solid #c4c4c4;border-top:0;border-radius:0 0 3px 3px;font-size:9.6px;line-height:19.4px;text-align:center;color:#111;padding-right:1.4px">Layers</div>
<!--/LAYERSBODY-->
</div>
<!--STYLING-->
<div id="styling" class="abs" style="left:863px;top:99px;width:337px;height:612px">
<!--STYLINGBODY-->
<div class="abs" style="left:7.0px;top:1.1px;font-size:8.4px;line-height:13px;white-space:nowrap;color:#222;">Layer Styling</div>
<svg class="abs" style="left:317px;top:3.4000000000000057px" width="19" height="9" viewBox="0 0 19 9"><rect x="0.5" y="0.5" width="7.4" height="7.4" rx="1.4" fill="none" stroke="#555" stroke-width="0.7"/><rect x="3.4" y="1.8" width="3.2" height="2.8" fill="none" stroke="#555" stroke-width="0.6"/><rect x="1.9" y="3.6" width="3.2" height="2.8" fill="#ececec" stroke="#555" stroke-width="0.6"/><rect x="10.3" y="0.5" width="7.4" height="7.4" rx="1.4" fill="none" stroke="#555" stroke-width="0.7"/><path d="M12,2.2 L16,6.2 M16,2.2 L12,6.2" stroke="#333" stroke-width="1.3"/></svg>
<div class="combo" style="left:6.0px;top:16.4px;width:329.0px;height:16.8px;line-height:14.8px;color:#111;padding-left:3.4px;font-size:9.5px"><svg class="abs" style="left:3.6px;top:2.6px" width="13" height="10" viewBox="0 0 13 10"><path d="M1,2 Q2.6,0.6 4.8,1.4 Q7.4,2.6 9.6,1.4 Q10.8,0.8 11.8,1.2 L11.6,7 Q10.4,6.4 9.2,7.2 Q7,8.4 5,7.2 Q3.4,6.4 1.8,8.4 Z" fill="#e2e2e2" stroke="#929292" stroke-width="0.8" stroke-linejoin="round"/></svg><span style="padding-left:14px;font-size:9.5px;position:relative;top:0.7px">Camps</span></div>
<div class="abs" style="left:6.3px;top:37.6px;width:27.0px;height:572.4px;background:#585858"></div>
<div class="abs" style="left:6.3px;top:60.0px;width:27.0px;height:22.6px;background:#ececec"></div>
<!--STRIPICONS-->
<svg class="abs" style="left:10.8px;top:40.0px" width="18" height="18" viewBox="0 0 18 18"><path d="M3,9.4 L7.4,7 L11.6,9 L11.6,13.6 L7.2,16.2 L3,13.8 Z" fill="#d94a3a"/><path d="M3,9.4 L7.2,11.6 V16.2 L3,13.8 Z" fill="#3f7fc8"/><path d="M7.2,11.6 L11.6,9 V13.6 L7.2,16.2 Z" fill="#f0d23c"/><path d="M16.2,1.6 L9.6,8.8" stroke="#b98a3a" stroke-width="1.8" stroke-linecap="round"/><path d="M9.8,7.4 L11.6,9.2 L8.4,13.4 Q6.4,13.6 6.2,11.4 Z" fill="#f2d9a0" stroke="#c29a4a" stroke-width="0.5"/></svg>
<svg class="abs" style="left:11.3px;top:67.0px" width="17" height="10" viewBox="0 0 17 10"><path d="M3.6,0.8 H15.4 a0.8,0.8 0 0 1 0.8,0.8 V8.4 a0.8,0.8 0 0 1 -0.8,0.8 H3.6 L0.6,5 Z" fill="#f1e58a" stroke="#c9b43a" stroke-width="0.8" stroke-linejoin="round"/><text x="9.4" y="7.4" font-family="Liberation Sans" font-weight="bold" font-size="6.4" text-anchor="middle" fill="#5a5a3a">abc</text></svg>
<svg class="abs" style="left:10.6px;top:85.0px" width="18" height="18" viewBox="0 0 18 18"><path d="M9,1.6 L16,5 L9,8.6 L2,5 Z" fill="#e25a5a" stroke="#7a1a1a" stroke-width="0.6" stroke-linejoin="round"/><path d="M2,5 L9,8.6 V16.6 L2,12.8 Z" fill="#62c04a" stroke="#1a5a1a" stroke-width="0.6" stroke-linejoin="round"/><path d="M16,5 L9,8.6 V16.6 L16,12.8 Z" fill="#f2e03a" stroke="#7a6a1a" stroke-width="0.6" stroke-linejoin="round"/></svg>
<svg class="abs" style="left:10.6px;top:107.6px" width="18" height="18" viewBox="0 0 18 18"><path d="M9,7 V10 M4.4,12 V10 H13.6 V12" fill="none" stroke="#d8a640" stroke-width="1.2"/><rect x="5.8" y="1.6" width="6.4" height="5.8" fill="#e66a6a" stroke="#b84a4a" stroke-width="0.5"/><rect x="1.4" y="11.4" width="6.2" height="5.4" fill="#f0d43c" stroke="#c8ac2a" stroke-width="0.5"/><rect x="10.4" y="11.4" width="6.2" height="5.4" fill="#7fb2e6" stroke="#5a8fc8" stroke-width="0.5"/><path d="M7.2,7.4 V11 M10.8,7.4 V11" stroke="#e0b450" stroke-width="1"/></svg>
<svg class="abs" style="left:10.6px;top:131.0px" width="18" height="18" viewBox="0 0 18 18"><path d="M9.4,1.6 L14.6,5.6 L9.4,9.6 V7.2 Q5.4,7 5.2,10.6 Q2.4,6 6.4,4.2 Q7.6,3.8 9.4,3.9 Z" fill="#5cb070" stroke="#3a8a50" stroke-width="0.4"/><path d="M9.6,8.6 L4.8,12.4 L9.6,16.2 V14 Q13.6,14.2 13.2,17.2 Q16.6,13.6 13.4,11.4 Q12,10.6 9.6,10.8 Z" fill="#ea8a3c" stroke="#c4681e" stroke-width="0.4"/></svg>
<!--/STRIPICONS-->
<div class="combo" style="left:35.6px;top:38.2px;width:277.2px;height:15.8px;line-height:13.8px;color:#111;padding-left:2.6px;font-size:9.5px"><svg class="abs" style="left:5px;top:3.6px" width="10" height="7" viewBox="0 0 10 7"><path d="M2,0.4 H9 a0.6,0.6 0 0 1 0.6,0.6 V6 a0.6,0.6 0 0 1 -0.6,0.6 H2 L0.3,3.5 Z" fill="#f3dc4a" stroke="#b79a18" stroke-width="0.5"/><text x="2.4" y="4.8" font-size="3.6" font-family="Liberation Sans" font-weight="bold" fill="#444">abc</text></svg><span style="padding-left:14px">Single labels</span></div>
<div class="abs" style="left:318.0px;top:38.2px;width:17.0px;height:16.0px;border:1px solid #c2c2c2;border-radius:3px;background:linear-gradient(#fff,#f1f1f1)"><!--ICPAINT-->
<svg class="abs" style="left:2px;top:1.4px" width="12" height="12" viewBox="0 0 12 12"><path d="M2.4,1.2 L6,3.6" stroke="#5a8fd0" stroke-width="1.6" stroke-linecap="round"/><path d="M5,2.6 L7.6,5.2" stroke="#7a9ac0" stroke-width="1.2"/><circle cx="7.6" cy="7.6" r="3.6" fill="#f2d43a" stroke="#c9a81c" stroke-width="0.6"/><path d="M5.6,6.2 Q7.6,4.6 9.6,6.2" fill="none" stroke="#f9ecaa" stroke-width="0.8"/></svg>
<!--/ICPAINT--></div>
<div class="abs" style="left:36.0px;top:61.1px;font-size:9.6px;line-height:13px;white-space:nowrap;color:#111;">Value</div>
<div class="combo" style="background:#fff;left:63.8px;top:59.5px;width:249.0px;height:16.1px;line-height:14.1px;color:#111;padding-left:2.2px;font-size:9.5px"><span style="font-size:6.3px;color:#666;letter-spacing:0.3px;position:relative;top:-1px">123</span><span style="padding-left:2.4px">id</span></div>
<div class="abs" style="left:318.0px;top:59.5px;width:17.0px;height:16.1px;border:1px solid #c2c2c2;border-radius:3px;background:linear-gradient(#fff,#f1f1f1);font-family:'Liberation Serif',serif;font-size:15px;line-height:13px;text-align:center;color:#6a1b7a">&#949;</div>
<div class="abs" style="left:35.6px;top:82.2px;width:34.3px;height:19.4px;background:linear-gradient(#f7f7f7,#e9e9e9);border:1px solid #cfcfcf;border-left-color:#d8d8d8;border-radius:3px 0 0 0"></div>
<div class="abs" style="left:69.9px;top:82.2px;width:34.3px;height:19.4px;background:linear-gradient(#f7f7f7,#e9e9e9);border:1px solid #cfcfcf;border-left-color:#d8d8d8;border-radius:0"></div>
<div class="abs" style="left:104.2px;top:82.2px;width:34.3px;height:19.4px;background:linear-gradient(#f7f7f7,#e9e9e9);border:1px solid #cfcfcf;border-left-color:#d8d8d8;border-radius:0"></div>
<div class="abs" style="left:172.8px;top:82.2px;width:34.3px;height:19.4px;background:linear-gradient(#f7f7f7,#e9e9e9);border:1px solid #cfcfcf;border-left-color:#d8d8d8;border-radius:0"></div>
<div class="abs" style="left:207.1px;top:82.2px;width:34.3px;height:19.4px;background:linear-gradient(#f7f7f7,#e9e9e9);border:1px solid #cfcfcf;border-left-color:#d8d8d8;border-radius:0"></div>
<div class="abs" style="left:241.4px;top:82.2px;width:34.3px;height:19.4px;background:linear-gradient(#f7f7f7,#e9e9e9);border:1px solid #cfcfcf;border-left-color:#d8d8d8;border-radius:0"></div>
<div class="abs" style="left:275.7px;top:82.2px;width:34.3px;height:19.4px;background:linear-gradient(#f7f7f7,#e9e9e9);border:1px solid #cfcfcf;border-left-color:#d8d8d8;border-radius:0 3px 0 0"></div>
<div class="abs" style="left:138.0px;top:80.4px;width:35.3px;height:22.0px;background:linear-gradient(#ffffff,#f2f2f2 70%,#ececec);border:1px solid #d0d0d0;border-bottom:0;border-radius:3px 3px 0 0"></div>
<!--TABICONS-->
<div class="abs" style="left:40.9px;top:84.9px;width:24px;text-align:center;font-size:6.6px;font-weight:bold;line-height:13px;color:#222">abc</div>
<svg class="abs" style="left:77.5px;top:84.4px" width="18" height="14" viewBox="0 0 18 14"><text x="3.2" y="6.2" font-family="Liberation Sans" font-size="7" fill="#8a8a8a">+</text><text x="7.8" y="6" font-family="Liberation Sans" font-weight="bold" font-size="6.4" fill="#222">ab</text><text x="3.2" y="12.6" font-family="Liberation Sans" font-size="7" fill="#8a8a8a">&lt;</text><text x="11.4" y="12.4" font-family="Liberation Sans" font-weight="bold" font-size="6.4" fill="#222">c</text></svg>
<svg class="abs" style="left:110.3px;top:85.4px" width="22" height="12" viewBox="0 0 22 12"><defs><filter id="tbf" x="-20%" y="-30%" width="140%" height="160%"><feGaussianBlur stdDeviation="0.9"/></filter></defs><rect x="3.4" y="2.4" width="15.2" height="7.4" rx="2.4" fill="#8fa6ee" filter="url(#tbf)"/><text x="11" y="8.4" font-family="Liberation Sans" font-weight="bold" font-size="6.6" text-anchor="middle" fill="#4a4a7a">abc</text></svg>
<svg class="abs" style="left:146.3px;top:83.6px" width="16" height="14" viewBox="0 0 16 14"><path d="M1.4,3 Q4,3.4 5,1.6 Q8,2.8 11,1.6 Q12,3.4 14.6,3 Q15.6,8 12.4,11 Q10,12.8 8,13 Q6,12.8 3.6,11 Q0.4,8 1.4,3 Z" fill="#2f6fb4" stroke="#1f559a" stroke-width="0.5"/><path d="M1.4,3 Q4,3.4 5,1.6 Q8,2.8 11,1.6 Q12,3.4 14.6,3 L14.8,4.6 H1.2 Z" fill="#d63a3a"/></svg>
<svg class="abs" style="left:180.1px;top:83.9px" width="17" height="15" viewBox="0 0 17 15"><path d="M3.4,3.4 Q8.6,1.4 14,3.6 Q16.6,8.6 12,12.8 Q9,14.4 6.6,13.4 Q1.8,9.4 3.4,3.4 Z" fill="#2a2f5a"/><path d="M1.6,2.2 Q7,0.2 12.2,2.4 Q14.6,7.4 10.4,11.4 Q7.4,13 5,12 Q0.2,8 1.6,2.2 Z" fill="#eef2fb" stroke="#b4bcd8" stroke-width="0.5"/></svg>
<svg class="abs" style="left:214.4px;top:84.1px" width="16" height="15" viewBox="0 0 16 15"><text x="8.4" y="6.2" font-family="Liberation Sans" font-weight="bold" font-size="6.6" text-anchor="middle" fill="#222">abc</text><path d="M4.2,13.6 L8.8,7.8" stroke="#222" stroke-width="1"/></svg>
<svg class="abs" style="left:249.0px;top:83.6px" width="16" height="16" viewBox="0 0 16 16"><g fill="#5d86ad"><path d="M8,0.8 L10.4,3.2 L8,5.6 L5.6,3.2 Z"/><path d="M8,10.4 L10.4,12.8 L8,15.2 L5.6,12.8 Z"/><path d="M3.2,5.6 L5.6,8 L3.2,10.4 L0.8,8 Z"/><path d="M12.8,5.6 L15.2,8 L12.8,10.4 L10.4,8 Z"/><path d="M8,6 L10,8 L8,10 L6,8 Z"/><path d="M4.6,2.6 L6,4 L4.6,5.4 L3.2,4 Z" opacity=".75"/><path d="M11.4,2.6 L12.8,4 L11.4,5.4 L10,4 Z" opacity=".75"/><path d="M4.6,10.6 L6,12 L4.6,13.4 L3.2,12 Z" opacity=".75"/><path d="M11.4,10.6 L12.8,12 L11.4,13.4 L10,12 Z" opacity=".75"/></g></svg>
<svg class="abs" style="left:283.6px;top:83.9px" width="16" height="15" viewBox="0 0 16 15"><path d="M14,1.4 Q10.4,6 8.4,10" fill="none" stroke="#8a8a8a" stroke-width="1.6" stroke-linecap="round"/><path d="M9,8.6 L10,10.2 Q7,13.4 2,13.4 Q5.6,12 6.6,9.4 Z" fill="#3a3a3a"/></svg>
<!--/TABICONS-->
<div class="abs" style="left:36.0px;top:109.5px;font-size:9.5px;line-height:13px;white-space:nowrap;color:#111;">Background</div>
<span class="cb" style="left:36.3px;top:130.7px;width:9.2px;height:9.2px"><svg viewBox="0 0 10 10" style="overflow:visible"><path d="M2.2 5 L4.4 7.9 L8.5 1.5" fill="none" stroke="#161616" stroke-width="1.5" stroke-linecap="round" stroke-linejoin="round"/></svg></span>
<div class="abs" style="left:49.8px;top:129.0px;font-size:9.5px;line-height:13px;white-space:nowrap;color:#111;">Draw background</div>
<svg class="abs" style="left:135.8px;top:129.2px" width="19" height="13" viewBox="0 0 19 13"><path d="M5,1 H12.4 V11 H5 Z" fill="#fcfcfc" stroke="#6e6e6e" stroke-width="0.9"/><path d="M5,1.4 L0.6,6 L5,10.6 Z" fill="#777" stroke="#666" stroke-width="0.5" stroke-linejoin="round"/><path d="M6.6,3.5 H11" stroke="#555" stroke-width="1.5"/><path d="M6.6,6.2 H11 M6.6,8.6 H11" stroke="#8a8a8a" stroke-width="0.9"/><path d="M15.4,10.4 L18.2,10.4 L16.8,12 Z" fill="#333"/></svg>
<div class="abs" style="left:37.8px;top:144.8px;width:297.2px;height:346.0px;border:2px solid #d6492f"></div>
<div class="abs" style="left:50.2px;top:151.5px;font-size:9.5px;line-height:13px;white-space:nowrap;color:#111;">Shape</div>
<div class="combo" style="left:115.3px;top:150.4px;width:184.9px;height:15.6px;line-height:13.6px;color:#111;padding-left:2.6px;font-size:9.5px">Marker Symbol</div>
<svg class="abs" style="left:311.2px;top:152.2px" width="19" height="13" viewBox="0 0 19 13"><path d="M5,1 H12.4 V11 H5 Z" fill="#fcfcfc" stroke="#6e6e6e" stroke-width="0.9"/><path d="M5,1.4 L0.6,6 L5,10.6 Z" fill="#777" stroke="#666" stroke-width="0.5" stroke-linejoin="round"/><path d="M6.6,3.5 H11" stroke="#555" stroke-width="1.5"/><path d="M6.6,6.2 H11 M6.6,8.6 H11" stroke="#8a8a8a" stroke-width="0.9"/><path d="M15.4,10.4 L18.2,10.4 L16.8,12 Z" fill="#333"/></svg>
<div class="abs" style="left:115.3px;top:171.4px;width:181.7px;height:15.6px;border:1px solid #c2c2c2;border-radius:3px 0 0 3px;background:linear-gradient(#fdfdfd,#efefef)"><div class="abs" style="left:74.2px;top:5px;width:30.5px;height:5.6px;background:#bfd04a"></div></div>
<div class="abs" style="left:296.5px;top:171.4px;width:8.1px;height:15.6px;border:1px solid #c2c2c2;border-radius:0 3px 3px 0;background:linear-gradient(#fdfdfd,#efefef)"><svg class="abs" style="left:1px;top:5.5px" width="5" height="4" viewBox="0 0 5 4"><path d="M0,0.3 H5 L2.5,3.6 Z" fill="#333"/></svg></div>
<div class="abs" style="left:50.2px;top:194.3px;font-size:9.5px;line-height:13px;white-space:nowrap;color:#111;">Size type</div>
<div class="combo" style="left:115.3px;top:193.0px;width:184.9px;height:16.2px;line-height:14.2px;color:#111;padding-left:2.6px;font-size:9.5px">Buffer</div>
<svg class="abs" style="left:311.2px;top:195.0px" width="19" height="13" viewBox="0 0 19 13"><path d="M5,1 H12.4 V11 H5 Z" fill="#fcfcfc" stroke="#6e6e6e" stroke-width="0.9"/><path d="M5,1.4 L0.6,6 L5,10.6 Z" fill="#777" stroke="#666" stroke-width="0.5" stroke-linejoin="round"/><path d="M6.6,3.5 H11" stroke="#555" stroke-width="1.5"/><path d="M6.6,6.2 H11 M6.6,8.6 H11" stroke="#8a8a8a" stroke-width="0.9"/><path d="M15.4,10.4 L18.2,10.4 L16.8,12 Z" fill="#333"/></svg>
<div class="abs" style="left:50.2px;top:217.1px;font-size:9.5px;line-height:13px;white-space:nowrap;color:#111;">Size</div>
<div class="spin" style="left:115.3px;top:215.6px;width:184.9px;height:16.2px;line-height:14.2px;color:#111;font-size:9.5px">1,5000<div class="abs" style="right:0;top:0;width:11px;height:100%;border-left:1px solid #d5d5d5;background:linear-gradient(#fff,#f0f0f0);border-radius:0 2px 2px 0"></div><svg class="abs" style="right:0;top:0" width="11" height="16" viewBox="0 0 11 16"><path d="M3,6.6 L5.5,3.6 L8,6.6 Z M3,9.4 L5.5,12.4 L8,9.4 Z" fill="#444"/></svg></div>
<svg class="abs" style="left:311.2px;top:217.8px" width="19" height="13" viewBox="0 0 19 13"><path d="M5,1 H12.4 V11 H5 Z" fill="#fcfcfc" stroke="#6e6e6e" stroke-width="0.9"/><path d="M5,1.4 L0.6,6 L5,10.6 Z" fill="#777" stroke="#666" stroke-width="0.5" stroke-linejoin="round"/><path d="M6.6,3.5 H11" stroke="#555" stroke-width="1.5"/><path d="M6.6,6.2 H11 M6.6,8.6 H11" stroke="#8a8a8a" stroke-width="0.9"/><path d="M15.4,10.4 L18.2,10.4 L16.8,12 Z" fill="#333"/></svg>
<div class="combo" style="left:115.3px;top:239.0px;width:184.9px;height:15.8px;line-height:13.8px;color:#111;padding-left:2.6px;font-size:9.5px">Millimeters</div>
<svg class="abs" style="left:311.2px;top:241.0px" width="19" height="13" viewBox="0 0 19 13"><path d="M5,1 H12.4 V11 H5 Z" fill="#fcfcfc" stroke="#6e6e6e" stroke-width="0.9"/><path d="M5,1.4 L0.6,6 L5,10.6 Z" fill="#777" stroke="#666" stroke-width="0.5" stroke-linejoin="round"/><path d="M6.6,3.5 H11" stroke="#555" stroke-width="1.5"/><path d="M6.6,6.2 H11 M6.6,8.6 H11" stroke="#8a8a8a" stroke-width="0.9"/><path d="M15.4,10.4 L18.2,10.4 L16.8,12 Z" fill="#333"/></svg>
<div class="abs" style="left:50.2px;top:266.9px;font-size:9.5px;line-height:13px;white-space:nowrap;color:#111;">Rotation</div>
<div class="combo" style="left:115.3px;top:265.6px;width:184.9px;height:16.0px;line-height:14.0px;color:#111;padding-left:2.6px;font-size:9.5px">Sync with label</div>
<svg class="abs" style="left:311.2px;top:267.6px" width="19" height="13" viewBox="0 0 19 13"><path d="M5,1 H12.4 V11 H5 Z" fill="#fcfcfc" stroke="#6e6e6e" stroke-width="0.9"/><path d="M5,1.4 L0.6,6 L5,10.6 Z" fill="#777" stroke="#666" stroke-width="0.5" stroke-linejoin="round"/><path d="M6.6,3.5 H11" stroke="#555" stroke-width="1.5"/><path d="M6.6,6.2 H11 M6.6,8.6 H11" stroke="#8a8a8a" stroke-width="0.9"/><path d="M15.4,10.4 L18.2,10.4 L16.8,12 Z" fill="#333"/></svg>
<div class="spin" style="left:115.3px;top:288.4px;width:184.9px;height:16.0px;line-height:14.0px;color:#a9a9a9;font-size:9.5px">0,00&#730;<div class="abs" style="right:0;top:0;width:11px;height:100%;border-left:1px solid #d5d5d5;background:linear-gradient(#fff,#f0f0f0);border-radius:0 2px 2px 0"></div><svg class="abs" style="right:0;top:0" width="11" height="16" viewBox="0 0 11 16"><path d="M3,6.6 L5.5,3.6 L8,6.6 Z M3,9.4 L5.5,12.4 L8,9.4 Z" fill="#444"/></svg></div>
<svg class="abs" style="left:311.2px;top:290.4px" width="19" height="13" viewBox="0 0 19 13" opacity="0.33"><path d="M5,1 H12.4 V11 H5 Z" fill="#fcfcfc" stroke="#6e6e6e" stroke-width="0.9"/><path d="M5,1.4 L0.6,6 L5,10.6 Z" fill="#777" stroke="#666" stroke-width="0.5" stroke-linejoin="round"/><path d="M6.6,3.5 H11" stroke="#555" stroke-width="1.5"/><path d="M6.6,6.2 H11 M6.6,8.6 H11" stroke="#8a8a8a" stroke-width="0.9"/><path d="M15.4,10.4 L18.2,10.4 L16.8,12 Z" fill="#333"/></svg>
<div class="abs" style="left:50.2px;top:312.5px;font-size:9.5px;line-height:13px;white-space:nowrap;color:#111;">Offset X,Y</div>
<div class="spin" style="left:115.3px;top:310.8px;width:89.9px;height:16.2px;line-height:14.2px;color:#111;font-size:9.5px">0,0000<div class="abs" style="right:0;top:0;width:11px;height:100%;border-left:1px solid #d5d5d5;background:linear-gradient(#fff,#f0f0f0);border-radius:0 2px 2px 0"></div><svg class="abs" style="right:0;top:0" width="11" height="16" viewBox="0 0 11 16"><path d="M3,6.6 L5.5,3.6 L8,6.6 Z M3,9.4 L5.5,12.4 L8,9.4 Z" fill="#444"/></svg></div>
<div class="spin" style="left:210.4px;top:310.8px;width:89.8px;height:16.2px;line-height:14.2px;color:#111;font-size:9.5px">0,0000<div class="abs" style="right:0;top:0;width:11px;height:100%;border-left:1px solid #d5d5d5;background:linear-gradient(#fff,#f0f0f0);border-radius:0 2px 2px 0"></div><svg class="abs" style="right:0;top:0" width="11" height="16" viewBox="0 0 11 16"><path d="M3,6.6 L5.5,3.6 L8,6.6 Z M3,9.4 L5.5,12.4 L8,9.4 Z" fill="#444"/></svg></div>
<svg class="abs" style="left:311.2px;top:313.0px" width="19" height="13" viewBox="0 0 19 13"><path d="M5,1 H12.4 V11 H5 Z" fill="#fcfcfc" stroke="#6e6e6e" stroke-width="0.9"/><path d="M5,1.4 L0.6,6 L5,10.6 Z" fill="#777" stroke="#666" stroke-width="0.5" stroke-linejoin="round"/><path d="M6.6,3.5 H11" stroke="#555" stroke-width="1.5"/><path d="M6.6,6.2 H11 M6.6,8.6 H11" stroke="#8a8a8a" stroke-width="0.9"/><path d="M15.4,10.4 L18.2,10.4 L16.8,12 Z" fill="#333"/></svg>
<div class="combo" style="left:115.3px;top:334.2px;width:184.9px;height:16.2px;line-height:14.2px;color:#111;padding-left:2.6px;font-size:9.5px">Millimeters</div>
<svg class="abs" style="left:311.2px;top:336.4px" width="19" height="13" viewBox="0 0 19 13"><path d="M5,1 H12.4 V11 H5 Z" fill="#fcfcfc" stroke="#6e6e6e" stroke-width="0.9"/><path d="M5,1.4 L0.6,6 L5,10.6 Z" fill="#777" stroke="#666" stroke-width="0.5" stroke-linejoin="round"/><path d="M6.6,3.5 H11" stroke="#555" stroke-width="1.5"/><path d="M6.6,6.2 H11 M6.6,8.6 H11" stroke="#8a8a8a" stroke-width="0.9"/><path d="M15.4,10.4 L18.2,10.4 L16.8,12 Z" fill="#333"/></svg>
<div class="abs" style="left:50.2px;top:358.5px;font-size:9.5px;line-height:13px;white-space:nowrap;color:#111;">Opacity</div>
<div class="abs" style="left:115.3px;top:363.2px;width:105.7px;height:3.6px;background:linear-gradient(#5fa4ea,#2f7fd8);border-radius:2px;border:0.5px solid #3a7fd0"></div>
<div class="abs" style="left:216.6px;top:360.2px;width:9.6px;height:9.6px;background:linear-gradient(#fff,#f0f0f0);border:1px solid #bdbdbd;border-radius:2.5px"></div>
<div class="spin" style="left:229.4px;top:357.0px;width:70.8px;height:16.0px;line-height:14.0px;color:#111;font-size:9.5px">100,0 %<div class="abs" style="right:0;top:0;width:11px;height:100%;border-left:1px solid #d5d5d5;background:linear-gradient(#fff,#f0f0f0);border-radius:0 2px 2px 0"></div><svg class="abs" style="right:0;top:0" width="11" height="16" viewBox="0 0 11 16"><path d="M3,6.6 L5.5,3.6 L8,6.6 Z M3,9.4 L5.5,12.4 L8,9.4 Z" fill="#444"/></svg></div>
<svg class="abs" style="left:311.2px;top:359.2px" width="19" height="13" viewBox="0 0 19 13"><path d="M5,1 H12.4 V11 H5 Z" fill="#fcfcfc" stroke="#6e6e6e" stroke-width="0.9"/><path d="M5,1.4 L0.6,6 L5,10.6 Z" fill="#777" stroke="#666" stroke-width="0.5" stroke-linejoin="round"/><path d="M6.6,3.5 H11" stroke="#555" stroke-width="1.5"/><path d="M6.6,6.2 H11 M6.6,8.6 H11" stroke="#8a8a8a" stroke-width="0.9"/><path d="M15.4,10.4 L18.2,10.4 L16.8,12 Z" fill="#333"/></svg>
<div class="abs" style="left:50.2px;top:381.7px;font-size:9.5px;line-height:13px;white-space:nowrap;color:#111;">Blend mode</div>
<div class="combo" style="left:115.3px;top:380.2px;width:184.9px;height:16.2px;line-height:14.2px;color:#111;padding-left:2.6px;font-size:9.5px">Normal</div>
<svg class="abs" style="left:311.2px;top:382.4px" width="19" height="13" viewBox="0 0 19 13"><path d="M5,1 H12.4 V11 H5 Z" fill="#fcfcfc" stroke="#6e6e6e" stroke-width="0.9"/><path d="M5,1.4 L0.6,6 L5,10.6 Z" fill="#777" stroke="#666" stroke-width="0.5" stroke-linejoin="round"/><path d="M6.6,3.5 H11" stroke="#555" stroke-width="1.5"/><path d="M6.6,6.2 H11 M6.6,8.6 H11" stroke="#8a8a8a" stroke-width="0.9"/><path d="M15.4,10.4 L18.2,10.4 L16.8,12 Z" fill="#333"/></svg>
<div class="abs" style="left:50.2px;top:405.1px;font-size:9.5px;line-height:13px;white-space:nowrap;color:#a9a9a9;">Fill color</div>
<div class="abs" style="left:115.3px;top:402.4px;width:177.2px;height:18.6px;border:1px solid #cdcdcd;border-radius:3px 0 0 3px;background:linear-gradient(#fdfdfd,#f2f2f2)"></div>
<div class="abs" style="left:292.0px;top:402.4px;width:8.4px;height:18.6px;border:1px solid #cdcdcd;border-radius:0 3px 3px 0;background:linear-gradient(#fdfdfd,#f2f2f2)"><svg class="abs" style="left:1.2px;top:7px" width="5" height="4" viewBox="0 0 5 4"><path d="M0,0.3 H5 L2.5,3.6 Z" fill="#444"/></svg></div>
<svg class="abs" style="left:311.2px;top:405.8px" width="19" height="13" viewBox="0 0 19 13" opacity="0.33"><path d="M5,1 H12.4 V11 H5 Z" fill="#fcfcfc" stroke="#6e6e6e" stroke-width="0.9"/><path d="M5,1.4 L0.6,6 L5,10.6 Z" fill="#777" stroke="#666" stroke-width="0.5" stroke-linejoin="round"/><path d="M6.6,3.5 H11" stroke="#555" stroke-width="1.5"/><path d="M6.6,6.2 H11 M6.6,8.6 H11" stroke="#8a8a8a" stroke-width="0.9"/><path d="M15.4,10.4 L18.2,10.4 L16.8,12 Z" fill="#333"/></svg>
<div class="abs" style="left:50.2px;top:429.3px;font-size:9.5px;line-height:13px;white-space:nowrap;color:#a9a9a9;">Stroke color</div>
<div class="abs" style="left:115.3px;top:425.8px;width:177.2px;height:19.8px;border:1px solid #cdcdcd;border-radius:3px 0 0 3px;background:linear-gradient(#fdfdfd,#f2f2f2)"><div class="abs" style="left:3px;top:3.4px;right:3px;bottom:3.4px;background:#d0d0d0;border-radius:2px"></div></div>
<div class="abs" style="left:292.0px;top:425.8px;width:8.4px;height:19.8px;border:1px solid #cdcdcd;border-radius:0 3px 3px 0;background:linear-gradient(#fdfdfd,#f2f2f2)"><svg class="abs" style="left:1.2px;top:7.6px" width="5" height="4" viewBox="0 0 5 4"><path d="M0,0.3 H5 L2.5,3.6 Z" fill="#444"/></svg></div>
<svg class="abs" style="left:311.2px;top:430.0px" width="19" height="13" viewBox="0 0 19 13" opacity="0.33"><path d="M5,1 H12.4 V11 H5 Z" fill="#fcfcfc" stroke="#6e6e6e" stroke-width="0.9"/><path d="M5,1.4 L0.6,6 L5,10.6 Z" fill="#777" stroke="#666" stroke-width="0.5" stroke-linejoin="round"/><path d="M6.6,3.5 H11" stroke="#555" stroke-width="1.5"/><path d="M6.6,6.2 H11 M6.6,8.6 H11" stroke="#8a8a8a" stroke-width="0.9"/><path d="M15.4,10.4 L18.2,10.4 L16.8,12 Z" fill="#333"/></svg>
<div class="abs" style="left:50.2px;top:452.7px;font-size:9.5px;line-height:13px;white-space:nowrap;color:#a9a9a9;">Stroke width</div>
<div class="spin" style="left:115.3px;top:451.6px;width:184.9px;height:15.6px;line-height:13.6px;color:#a9a9a9;font-size:9.5px">0,0000<div class="abs" style="right:0;top:0;width:11px;height:100%;border-left:1px solid #d5d5d5;background:linear-gradient(#fff,#f0f0f0);border-radius:0 2px 2px 0"></div><svg class="abs" style="right:0;top:0" width="11" height="16" viewBox="0 0 11 16"><path d="M3,6.6 L5.5,3.6 L8,6.6 Z M3,9.4 L5.5,12.4 L8,9.4 Z" fill="#444"/></svg></div>
<svg class="abs" style="left:311.2px;top:453.4px" width="19" height="13" viewBox="0 0 19 13" opacity="0.33"><path d="M5,1 H12.4 V11 H5 Z" fill="#fcfcfc" stroke="#6e6e6e" stroke-width="0.9"/><path d="M5,1.4 L0.6,6 L5,10.6 Z" fill="#777" stroke="#666" stroke-width="0.5" stroke-linejoin="round"/><path d="M6.6,3.5 H11" stroke="#555" stroke-width="1.5"/><path d="M6.6,6.2 H11 M6.6,8.6 H11" stroke="#8a8a8a" stroke-width="0.9"/><path d="M15.4,10.4 L18.2,10.4 L16.8,12 Z" fill="#333"/></svg>
<svg class="abs" style="left:311.2px;top:475.6px" width="19" height="13" viewBox="0 0 19 13" opacity="0.33"><path d="M5,1 H12.4 V11 H5 Z" fill="#fcfcfc" stroke="#6e6e6e" stroke-width="0.9"/><path d="M5,1.4 L0.6,6 L5,10.6 Z" fill="#777" stroke="#666" stroke-width="0.5" stroke-linejoin="round"/><path d="M6.6,3.5 H11" stroke="#555" stroke-width="1.5"/><path d="M6.6,6.2 H11 M6.6,8.6 H11" stroke="#8a8a8a" stroke-width="0.9"/><path d="M15.4,10.4 L18.2,10.4 L16.8,12 Z" fill="#333"/></svg>
<span class="cb" style="left:50.4px;top:498.7px;width:9.4px;height:9.4px"></span>
<div class="abs" style="left:64.0px;top:497.1px;font-size:9.5px;line-height:13px;white-space:nowrap;color:#111;">Draw effects</div>
<div class="abs" style="left:313.5px;top:496.2px;width:16.3px;height:15.4px;border:1px solid #cfcfcf;border-radius:3px;background:linear-gradient(#fbfbfb,#f0f0f0)"><svg class="abs" style="left:3px;top:2.6px" width="10" height="10" viewBox="0 0 10 10"><path d="M5,0.6 L6.3,3.6 L9.5,3.9 L7.1,6 L7.8,9.2 L5,7.5 L2.2,9.2 L2.9,6 L0.5,3.9 L3.7,3.6 Z" fill="#c9c9b8" stroke="#b5b5a5" stroke-width="0.5"/></svg></div>
<div class="abs" style="left:35.8px;top:593.8px;width:16.6px;height:15.8px;border:1px solid #c6c6c6;border-radius:3px;background:linear-gradient(#fdfdfd,#f0f0f0)"><svg class="abs" style="left:3px;top:3px" width="10" height="9" viewBox="0 0 10 9"><path d="M4.2,0.6 L0.8,3.4 L4.2,6.2 V4.6 Q7.2,4.4 6.4,8.2 Q9.4,5.6 7.6,3.2 Q6.4,2 4.2,2.2 Z" fill="#e9772e" stroke="#c25a18" stroke-width="0.4"/></svg></div>
<div class="abs" style="left:57.4px;top:593.8px;width:16.4px;height:15.8px;border:1px solid #c6c6c6;border-radius:3px;background:linear-gradient(#fdfdfd,#f0f0f0)"><svg class="abs" style="left:3px;top:3px" width="10" height="9" viewBox="0 0 10 9"><path d="M5.8,0.6 L9.2,3.4 L5.8,6.2 V4.6 Q2.8,4.4 3.6,8.2 Q0.6,5.6 2.4,3.2 Q3.6,2 5.8,2.2 Z" fill="#74b85e" stroke="#4d9440" stroke-width="0.4"/></svg></div>
<span class="cb" style="left:205.8px;top:597.1px;width:9.4px;height:9.4px"><svg viewBox="0 0 10 10" style="overflow:visible"><path d="M2.2 5 L4.4 7.9 L8.5 1.5" fill="none" stroke="#161616" stroke-width="1.5" stroke-linecap="round" stroke-linejoin="round"/></svg></span>
<div class="abs" style="left:219.4px;top:595.5px;font-size:9.5px;line-height:13px;white-space:nowrap;color:#111;">Live update</div>
<div class="abs" style="left:277.6px;top:593.8px;width:57.2px;height:16.4px;border:1px solid #c4c4c4;border-radius:3.5px;background:linear-gradient(#fff,#f3f3f3);text-align:center;font-size:9.6px;line-height:15.5px;color:#111;box-shadow:0 0.5px 0.5px rgba(0,0,0,.15)">Apply</div>
<!--/STYLINGBODY-->
</div>
<!--STATUS-->
<div id="status" class="abs" style="left:0;top:711px;width:1200px;height:22px">
<!--STATUSBODY-->
<div class="abs" style="left:3.0px;top:3.4px;width:152.8px;height:16.2px;border:1px solid #c6c6c6;border-radius:2px;background:#fff;font-size:8.3px;line-height:14.2px;white-space:nowrap;color:#111;border-radius:2px;"><svg class="abs" style="left:5.2px;top:2.8px" width="10" height="10" viewBox="0 0 10 10"><circle cx="4" cy="4" r="3" fill="none" stroke="#777" stroke-width="0.9"/><path d="M6.2,6.2 L9,9" stroke="#777" stroke-width="1"/></svg><span class="abs" style="left:20.2px;top:0.4px;font-size:9.5px;color:#7b7b7b">Type to locate (&#8984;K)</span></div>
<div class="abs" style="left:161.5px;top:4.9px;font-size:8.45px;line-height:13px;white-space:nowrap;color:#111;">Toggles the editing state of the current layer</div>
<div class="abs" style="left:561.6px;top:4.9px;font-size:8.3px;line-height:13px;white-space:nowrap;color:#111;">Coordinate</div>
<div class="abs" style="left:605.4px;top:3.4px;width:94.2px;height:15.6px;border:1px solid #c6c6c6;border-radius:2px;background:#fff;font-size:8.3px;line-height:13.6px;white-space:nowrap;color:#111;text-align:center;">264401.09,271893.52</div>
<!--ICCOORD-->
<svg class="abs" style="left:703px;top:4.6px" width="12" height="13" viewBox="0 0 12 13"><path d="M1,2 L4,0.8 L5,3.4 L2,4.6 Z" fill="#555"/><path d="M3.4,4 L4.6,6.4" stroke="#555" stroke-width="1.1"/><ellipse cx="6.6" cy="8.6" rx="4.6" ry="3.4" fill="#fafafa" stroke="#444" stroke-width="0.9" transform="rotate(35 6.6 8.6)"/><path d="M4.4,6.4 L9,10.6 M6.8,5.6 L5.4,11" stroke="#444" stroke-width="0.7"/></svg>
<!--/ICCOORD-->
<div class="abs" style="left:724.0px;top:4.9px;font-size:8.3px;line-height:13px;white-space:nowrap;color:#111;">Scale</div>
<div class="abs" style="left:746.4px;top:3.4px;width:66.6px;height:15.6px;border:1px solid #c6c6c6;border-radius:2px;background:#fff;font-size:8.3px;line-height:13.6px;white-space:nowrap;color:#111;padding-left:3px;">1:517<div class="abs" style="right:0;top:0;width:14.4px;height:100%;border-left:1px solid #d8d8d8;background:linear-gradient(#fff,#f2f2f2);border-radius:0 2px 2px 0"></div><svg class="abs" style="right:3.6px;top:5.4px" width="7" height="5" viewBox="0 0 7 5"><path d="M0.4,0.4 H6.6 L3.5,4.4 Z" fill="#444"/></svg></div>
<svg class="abs" style="left:822px;top:5px" width="10" height="12" viewBox="0 0 10 12"><path d="M2.4,5.4 V3.6 a2.6,2.6 0 0 1 5.2,0 V5.4" fill="none" stroke="#8a8a8a" stroke-width="1.3"/><rect x="0.8" y="5.2" width="8.4" height="6" rx="1" fill="#8f8f8f"/></svg>
<div class="abs" style="left:837.6px;top:4.9px;font-size:8.3px;line-height:13px;white-space:nowrap;color:#111;">Magnifier</div>
<div class="abs" style="left:874.6px;top:3.6px;width:67.2px;height:15.6px;border:1px solid #c6c6c6;border-radius:2px;background:#fff;font-size:8.3px;line-height:13.6px;white-space:nowrap;color:#111;padding-left:3.5px;">100%<div class="abs" style="right:0;top:0;width:10px;height:100%;border-left:1px solid #d8d8d8;background:linear-gradient(#fff,#f0f0f0);border-radius:0 2px 2px 0"></div><svg class="abs" style="right:0;top:0" width="10" height="15" viewBox="0 0 10 15"><path d="M2.6,6.2 L5,3.4 L7.4,6.2 Z M2.6,8.8 L5,11.6 L7.4,8.8 Z" fill="#444"/></svg></div>
<div class="abs" style="left:948.8px;top:4.9px;font-size:8.3px;line-height:13px;white-space:nowrap;color:#111;">Rotation</div>
<div class="abs" style="left:986.0px;top:3.6px;width:64.6px;height:15.6px;border:1px solid #c6c6c6;border-radius:2px;background:#fff;font-size:8.3px;line-height:13.6px;white-space:nowrap;color:#111;padding-left:3.5px;">0,0 &deg;<div class="abs" style="right:0;top:0;width:10px;height:100%;border-left:1px solid #d8d8d8;background:linear-gradient(#fff,#f0f0f0);border-radius:0 2px 2px 0"></div><svg class="abs" style="right:0;top:0" width="10" height="15" viewBox="0 0 10 15"><path d="M2.6,6.2 L5,3.4 L7.4,6.2 Z M2.6,8.8 L5,11.6 L7.4,8.8 Z" fill="#444"/></svg></div>
<span class="cb" style="left:1056.4px;top:6.6px;width:9.2px;height:9.2px"><svg viewBox="0 0 10 10" style="overflow:visible"><path d="M2.2 5 L4.4 7.9 L8.5 1.5" fill="none" stroke="#161616" stroke-width="1.5" stroke-linecap="round" stroke-linejoin="round"/></svg></span>
<div class="abs" style="left:1069.8px;top:4.9px;font-size:8.3px;line-height:13px;white-space:nowrap;color:#111;">Render</div>
<svg class="abs" style="left:1107px;top:6px" width="11" height="11" viewBox="0 0 11 11"><circle cx="5.5" cy="5.5" r="4.6" fill="#e8e8e8" stroke="#666" stroke-width="0.8"/><ellipse cx="5.5" cy="5.5" rx="2.1" ry="4.6" fill="none" stroke="#666" stroke-width="0.6"/><path d="M1,5.5 H10 M1.8,3.2 H9.2 M1.8,7.8 H9.2" stroke="#666" stroke-width="0.6"/></svg>
<div class="abs" style="left:1119.8px;top:4.9px;font-size:8.1px;line-height:13px;white-space:nowrap;color:#111;">EPSG:20790</div>
<svg class="abs" style="left:1183.6px;top:5.399999999999977px" width="13" height="12" viewBox="0 0 13 12"><path d="M6.5,0.8 C3.2,0.8 0.8,2.8 0.8,5.2 C0.8,6.6 1.6,7.8 2.8,8.6 L2.2,11 L5,9.4 C5.5,9.5 6,9.6 6.5,9.6 C9.8,9.6 12.2,7.6 12.2,5.2 C12.2,2.8 9.8,0.8 6.5,0.8 Z" fill="#6a6a6a"/><circle cx="4" cy="5.2" r="0.9" fill="#eee"/><circle cx="6.5" cy="5.2" r="0.9" fill="#eee"/><circle cx="9" cy="5.2" r="0.9" fill="#eee"/></svg>
<!--/STATUSBODY-->
</div>
</body></html>
